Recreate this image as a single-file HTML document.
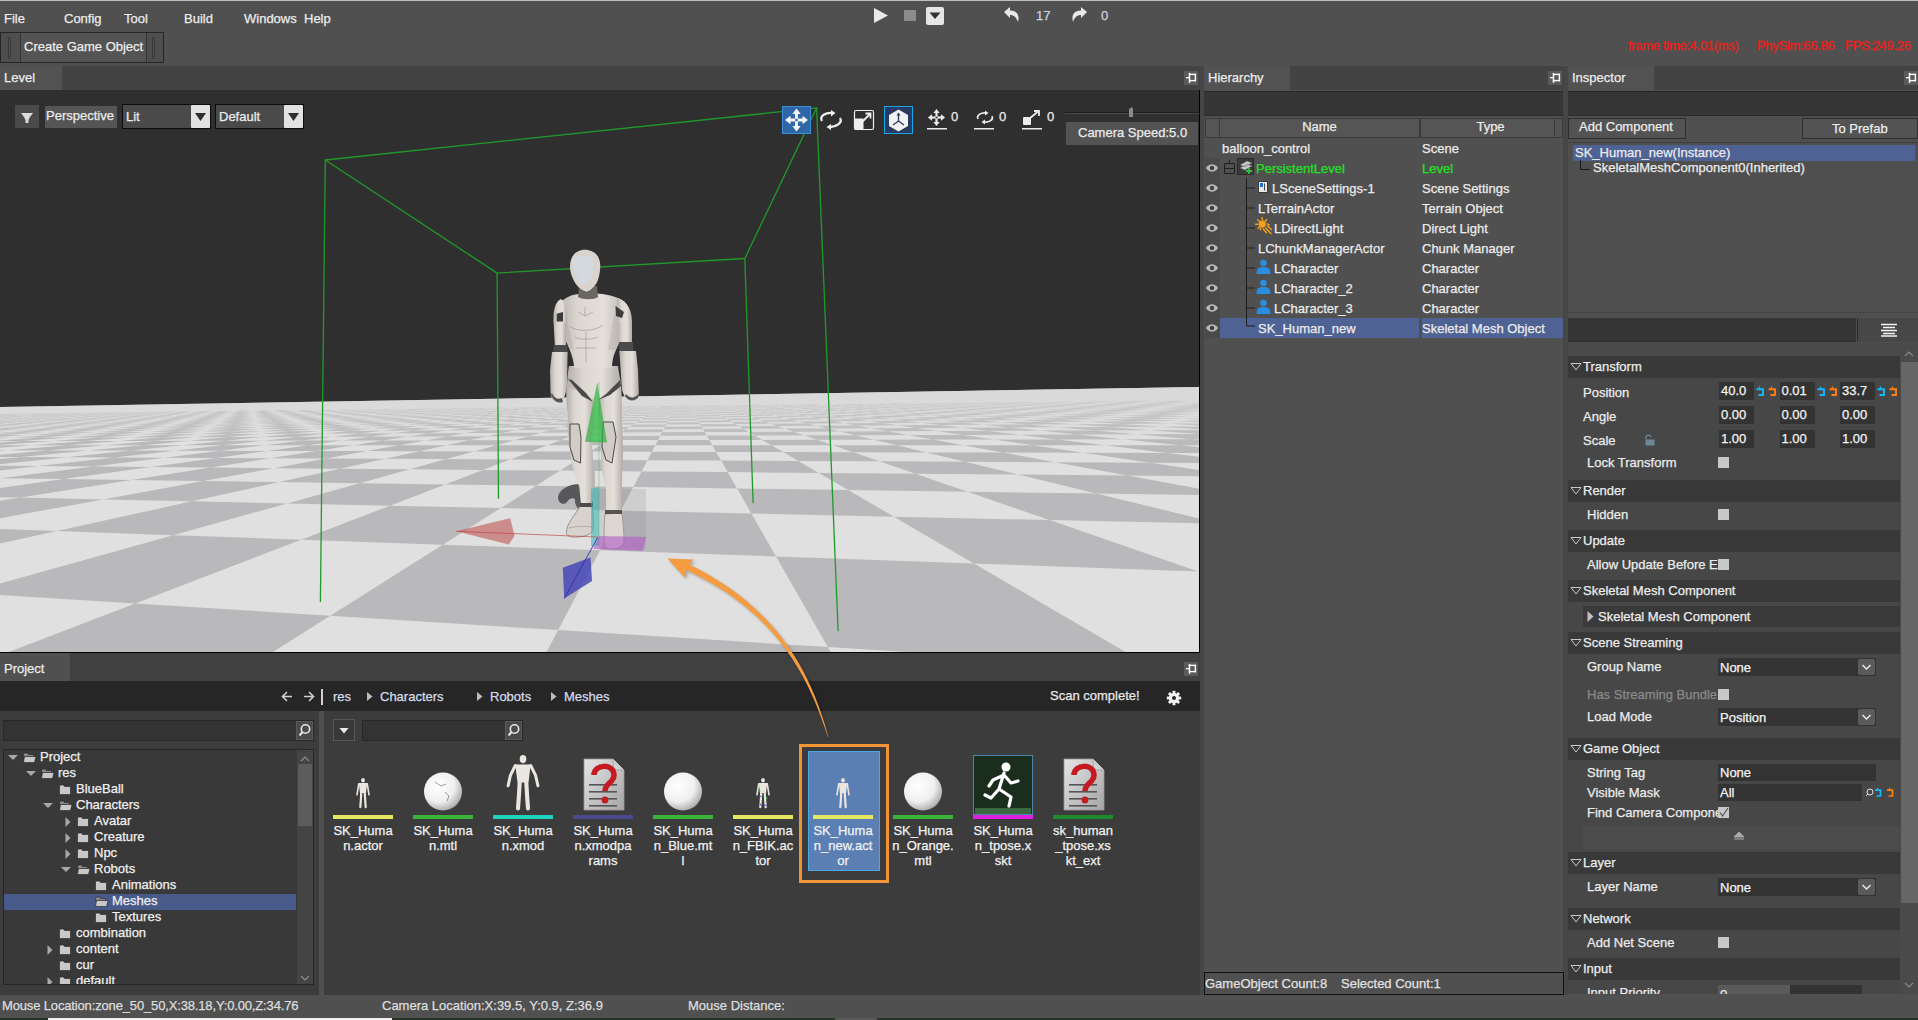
<!DOCTYPE html><html><head><meta charset='utf-8'><style>
*{margin:0;padding:0;box-sizing:border-box}
html,body{width:1918px;height:1020px;overflow:hidden;background:#505050}
body{position:relative;font-family:"Liberation Sans",sans-serif}
.a{position:absolute}
.t{position:absolute;font-size:13px;line-height:16px;color:#ececec;white-space:nowrap;-webkit-text-stroke:0.25px currentColor}
svg{position:absolute;overflow:visible}
</style></head><body>
<div class="a" style="left:0px;top:0px;width:1918px;height:1px;background:#bdbdbd;"></div>
<div class="a" style="left:0px;top:1px;width:1918px;height:64px;background:#505050;"></div>
<div class="t" style="left:4px;top:10.5px;">File</div>
<div class="t" style="left:64px;top:10.5px;">Config</div>
<div class="t" style="left:124px;top:10.5px;">Tool</div>
<div class="t" style="left:184px;top:10.5px;">Build</div>
<div class="t" style="left:244px;top:10.5px;">Windows</div>
<div class="t" style="left:304px;top:10.5px;">Help</div>
<div class="a" style="left:0px;top:32px;width:164px;height:31px;background:#4e4e4e;border:1px solid #262626;"></div>
<div class="a" style="left:20px;top:33px;width:1px;height:29px;background:#333;"></div>
<div class="a" style="left:146px;top:33px;width:1px;height:29px;background:#333;"></div>
<div class="a" style="left:21px;top:33px;width:125px;height:29px;background:#545454;"></div>
<div class="a" style="left:8px;top:37px;width:1px;height:22px;background:#3a3a3a;"></div>
<div class="a" style="left:10px;top:37px;width:1px;height:22px;background:#3a3a3a;"></div>
<div class="a" style="left:152px;top:37px;width:1px;height:22px;background:#3a3a3a;"></div>
<div class="a" style="left:154px;top:37px;width:1px;height:22px;background:#3a3a3a;"></div>
<div class="t" style="left:24px;top:38.5px;">Create Game Object</div>
<svg style="left:0;top:0" width="1918" height="32"><path d="M874 8 L888 15.5 L874 23 Z" fill="#eaeaea"/><rect x="904" y="10" width="12" height="11" rx="1" fill="#8c8c8c"/><rect x="926" y="7" width="18" height="18" rx="2" fill="#e6e6e6"/><path d="M929.5 12.5 L940.5 12.5 L935 19 Z" fill="#333"/><path d="M1004 12 L1010 7 L1010 10.5 C1016 10.5 1020 14 1018 22 C1016 16 1013 15 1010 15 L1010 18 Z" fill="#e8e8e8"/><path d="M1087 12 L1081 7 L1081 10.5 C1075 10.5 1071 14 1073 22 C1075 16 1078 15 1081 15 L1081 18 Z" fill="#e8e8e8"/></svg>
<div class="t" style="left:1036px;top:7.5px;color:#ccd4e2;">17</div>
<div class="t" style="left:1101px;top:7.5px;color:#ccd4e2;">0</div>
<div class="t" style="left:1628px;top:37.5px;color:#e8211d;-webkit-text-stroke:0.35px #e8211d;letter-spacing:-0.3px">frame time:4.01(ms)</div>
<div class="t" style="left:1757px;top:37.5px;color:#e8211d;-webkit-text-stroke:0.35px #e8211d;letter-spacing:-0.3px">PhySim:66.86</div>
<div class="t" style="left:1845px;top:37.5px;color:#e8211d;-webkit-text-stroke:0.35px #e8211d;letter-spacing:-0.3px">FPS:249.26</div>
<div class="a" style="left:0px;top:66px;width:1200px;height:24px;background:#434343;"></div>
<div class="a" style="left:0px;top:66px;width:62px;height:24px;background:#525252;"></div>
<div class="t" style="left:4px;top:69.5px;">Level</div>
<div class="a" style="left:1184px;top:71px;width:14px;height:14px;background:#5a5a5a;"></div>
<svg style="left:1184px;top:71px" width="14" height="14"><g fill="#ffffff"><rect x="4.8" y="1.9" width="1.4" height="10"/><rect x="4.8" y="2.7" width="7.2" height="1.4"/><rect x="4.8" y="8.9" width="7.2" height="1.4"/><rect x="10.7" y="2.7" width="1.4" height="7.6"/><rect x="2" y="6" width="3" height="1.3"/></g></svg>
<div class="a" style="left:1200px;top:66px;width:4px;height:929px;background:#464646;"></div>
<div class="a" style="left:1204px;top:66px;width:360px;height:24px;background:#434343;"></div>
<div class="a" style="left:1204px;top:66px;width:86px;height:24px;background:#525252;"></div>
<div class="t" style="left:1208px;top:69.5px;">Hierarchy</div>
<div class="a" style="left:1548px;top:71px;width:14px;height:14px;background:#5a5a5a;"></div>
<svg style="left:1548px;top:71px" width="14" height="14"><g fill="#ffffff"><rect x="4.8" y="1.9" width="1.4" height="10"/><rect x="4.8" y="2.7" width="7.2" height="1.4"/><rect x="4.8" y="8.9" width="7.2" height="1.4"/><rect x="10.7" y="2.7" width="1.4" height="7.6"/><rect x="2" y="6" width="3" height="1.3"/></g></svg>
<div class="a" style="left:1564px;top:66px;width:4px;height:929px;background:#464646;"></div>
<div class="a" style="left:1568px;top:66px;width:350px;height:24px;background:#434343;"></div>
<div class="a" style="left:1568px;top:66px;width:86px;height:24px;background:#525252;"></div>
<div class="t" style="left:1572px;top:69.5px;">Inspector</div>
<div class="a" style="left:1904px;top:71px;width:14px;height:14px;background:#5a5a5a;"></div>
<svg style="left:1904px;top:71px" width="14" height="14"><g fill="#ffffff"><rect x="4.8" y="1.9" width="1.4" height="10"/><rect x="4.8" y="2.7" width="7.2" height="1.4"/><rect x="4.8" y="8.9" width="7.2" height="1.4"/><rect x="10.7" y="2.7" width="1.4" height="7.6"/><rect x="2" y="6" width="3" height="1.3"/></g></svg>
<div class="a" style="left:0;top:90px;width:1200px;height:563px;background:#2f2f2f;overflow:hidden;border-right:1px solid #000;border-bottom:1px solid #000">
<svg style="left:0;top:-90px" width="1200" height="653" viewBox="0 0 1200 653"><defs><linearGradient id="hz" x1="0" y1="385" x2="0" y2="445" gradientUnits="userSpaceOnUse"><stop offset="0" stop-color="#d8d8d8" stop-opacity="0.95"/><stop offset="0.3" stop-color="#d6d6d6" stop-opacity="0.6"/><stop offset="1" stop-color="#d4d4d4" stop-opacity="0"/></linearGradient></defs><path d="M0 407 L1200 387 L1200 653 L0 653 Z" fill="#e0e0e0"/><path d="M-286.7 765.4 19.2 812.2 330.3 615.7 135.2 603.5ZM429.5 874.9 1008.9 963.5 827.8 647.0 558.2 630.1ZM-311.6 575.3 -181.4 583.5 56.8 531.1 -49.5 527.3ZM-33.7 592.8 135.2 603.5 301.2 539.7 173.2 535.2ZM330.3 615.7 558.2 630.1 600.1 550.3 442.8 544.7ZM827.8 647.0 1151.9 667.4 973.9 563.5 776.0 556.5ZM1548.7 692.4 2045.8 723.7 1454.7 580.4 1198.2 571.4ZM-146.9 523.9 -49.5 527.3 103.3 499.4 20.4 497.6ZM56.8 531.1 173.2 535.2 287.3 503.4 192.0 501.3ZM301.2 539.7 442.8 544.7 500.8 508.1 390.0 505.7ZM600.1 550.3 776.0 556.5 751.4 513.6 620.9 510.7ZM973.9 563.5 1198.2 571.4 1049.7 520.1 893.8 516.7ZM-57.1 495.9 20.4 497.6 131.6 480.1 63.7 479.1ZM103.3 499.4 192.0 501.3 279.2 482.1 203.3 481.1ZM287.3 503.4 390.0 505.7 445.2 484.4 359.7 483.3ZM500.8 508.1 620.9 510.7 633.3 487.1 536.2 485.7ZM751.4 513.6 893.8 516.7 848.2 490.1 737.1 488.5ZM1049.7 520.1 1221.2 523.8 1096.1 493.5 967.6 491.7ZM-119.5 476.6 -61.5 477.4 38.3 466.1 -14.2 465.6ZM-0.5 478.2 63.7 479.1 150.6 467.1 93.2 466.6ZM131.6 480.1 203.3 481.1 273.8 468.2 210.8 467.6ZM279.2 482.1 359.7 483.3 409.7 469.3 340.0 468.7ZM445.2 484.4 536.2 485.7 560.1 470.6 482.9 470.0ZM633.3 487.1 737.1 488.5 727.7 472.1 641.6 471.4ZM848.2 490.1 967.6 491.7 915.5 473.7 818.8 472.9ZM1096.1 493.5 1234.9 495.5 1127.5 475.6 1018.2 474.6ZM-64.4 465.2 -14.2 465.6 66.7 457.2 20.6 457.0ZM38.3 466.1 93.2 466.6 164.3 457.7 114.5 457.5ZM150.6 467.1 210.8 467.6 270.0 458.3 216.1 458.0ZM273.8 468.2 340.0 468.7 385.0 458.8 326.3 458.5ZM409.7 469.3 482.9 470.0 510.3 459.5 446.2 459.1ZM560.1 470.6 641.6 471.4 647.5 460.2 577.3 459.8ZM727.7 472.1 818.8 472.9 798.3 460.9 721.1 460.5ZM915.5 473.7 1018.2 474.6 965.0 461.7 879.5 461.3ZM1127.5 475.6 1244.0 476.6 1150.1 462.7 1055.0 462.2ZM-107.8 456.4 -66.5 456.6 7.5 450.3 -30.9 450.2ZM-23.8 456.8 20.6 457.0 88.3 450.5 47.2 450.4ZM66.7 457.2 114.5 457.5 174.6 450.7 130.7 450.6ZM164.3 457.7 216.1 458.0 267.2 450.9 220.1 450.8ZM270.0 458.3 326.3 458.5 366.8 451.1 316.1 451.0ZM385.0 458.8 446.2 459.1 474.2 451.4 419.5 451.2ZM510.3 459.5 577.3 459.8 590.2 451.6 531.0 451.5ZM647.5 460.2 721.1 460.5 716.1 451.9 651.9 451.8ZM798.3 460.9 879.5 461.3 853.2 452.2 783.2 452.1ZM965.0 461.7 1055.0 462.2 1002.9 452.5 926.3 452.4ZM1150.1 462.7 1250.5 463.2 1167.1 452.9 1083.0 452.7ZM-68.1 450.2 -30.9 450.2 32.4 445.2 -2.5 445.2ZM7.5 450.3 47.2 450.4 105.3 445.2 68.3 445.2ZM88.3 450.5 130.7 450.6 182.7 445.2 143.4 445.2ZM174.6 450.7 220.1 450.8 265.1 445.2 223.2 445.2ZM267.2 450.9 316.1 451.0 352.9 445.2 308.3 445.2ZM366.8 451.1 419.5 451.2 446.8 445.2 399.1 445.2ZM474.2 451.4 531.0 451.5 547.3 445.2 496.2 445.2ZM590.2 451.6 651.9 451.8 655.3 445.2 600.3 445.2ZM716.1 451.9 783.2 452.1 771.5 445.3 712.3 445.2ZM853.2 452.2 926.3 452.4 897.0 445.3 833.0 445.3ZM1002.9 452.5 1083.0 452.7 1032.8 445.3 963.5 445.3ZM1167.1 452.9 1255.3 453.1 1180.4 445.3 1105.1 445.3ZM-36.4 445.2 -2.5 445.2 52.6 441.0 20.7 441.1ZM32.4 445.2 68.3 445.2 119.0 440.9 85.3 441.0ZM105.3 445.2 143.4 445.2 189.1 440.8 153.6 440.9ZM182.7 445.2 223.2 445.2 263.3 440.7 225.7 440.7ZM265.1 445.2 308.3 445.2 341.9 440.5 302.0 440.6ZM352.9 445.2 399.1 445.2 425.3 440.4 383.0 440.5ZM446.8 445.2 496.2 445.2 514.0 440.3 469.0 440.3ZM547.3 445.2 600.3 445.2 608.5 440.1 560.5 440.2ZM655.3 445.2 712.3 445.2 709.3 440.0 658.0 440.0ZM771.5 445.3 833.0 445.3 817.1 439.8 762.3 439.9ZM897.0 445.3 963.5 445.3 932.8 439.6 873.9 439.7ZM1032.8 445.3 1105.1 445.3 1057.1 439.4 993.8 439.5ZM1180.4 445.3 1259.1 445.3 1191.1 439.2 1122.9 439.3ZM-70.2 441.2 -40.7 441.2 11.2 437.7 -16.9 437.8ZM-10.4 441.1 20.7 441.1 69.3 437.6 39.9 437.6ZM52.6 441.0 85.3 441.0 130.3 437.4 99.4 437.5ZM119.0 440.9 153.6 440.9 194.4 437.2 162.0 437.3ZM189.1 440.8 225.7 440.7 261.9 437.0 227.7 437.1ZM263.3 440.7 302.0 440.6 333.0 436.8 297.0 436.9ZM341.9 440.5 383.0 440.5 408.0 436.5 370.0 436.7ZM425.3 440.4 469.0 440.3 487.3 436.3 447.1 436.4ZM514.0 440.3 560.5 440.2 571.3 436.0 528.7 436.2ZM608.5 440.1 658.0 440.0 660.3 435.8 615.1 435.9ZM709.3 440.0 762.3 439.9 754.8 435.5 706.8 435.6ZM817.1 439.8 873.9 439.7 855.4 435.2 804.3 435.3ZM932.8 439.6 993.8 439.5 962.6 434.9 908.1 435.0ZM1057.1 439.4 1122.9 439.3 1077.2 434.5 1018.9 434.7ZM1191.1 439.2 1262.1 439.1 1199.9 434.1 1137.5 434.3ZM-44.2 437.9 -16.9 437.8 29.4 434.9 3.3 435.0ZM11.2 437.7 39.9 437.6 83.4 434.6 56.1 434.8ZM69.3 437.6 99.4 437.5 139.8 434.4 111.3 434.5ZM130.3 437.4 162.0 437.3 198.8 434.2 169.0 434.3ZM194.4 437.2 227.7 437.1 260.7 433.9 229.4 434.0ZM261.9 437.0 297.0 436.9 325.6 433.6 292.8 433.8ZM333.0 436.8 370.0 436.7 393.8 433.3 359.3 433.5ZM408.0 436.5 447.1 436.4 465.5 433.0 429.2 433.2ZM487.3 436.3 528.7 436.2 541.1 432.7 502.8 432.9ZM571.3 436.0 615.1 435.9 620.7 432.4 580.3 432.6ZM660.3 435.8 706.8 435.6 704.8 432.0 662.1 432.2ZM754.8 435.5 804.3 435.3 793.7 431.7 748.6 431.9ZM855.4 435.2 908.1 435.0 887.9 431.3 840.1 431.5ZM962.6 434.9 1018.9 434.7 987.8 430.9 937.1 431.1ZM1077.2 434.5 1137.5 434.3 1094.1 430.4 1040.1 430.6ZM1199.9 434.1 1264.6 433.9 1207.3 429.9 1149.8 430.2ZM-22.2 435.1 3.3 435.0 45.1 432.4 20.7 432.5ZM29.4 434.9 56.1 434.8 95.4 432.2 70.0 432.3ZM83.4 434.6 111.3 434.5 147.9 431.9 121.4 432.0ZM139.8 434.4 169.0 434.3 202.6 431.6 174.9 431.8ZM198.8 434.2 229.4 434.0 259.7 431.3 230.9 431.5ZM260.7 433.9 292.8 433.8 319.5 431.0 289.3 431.2ZM325.6 433.6 359.3 433.5 381.9 430.7 350.3 430.8ZM393.8 433.3 429.2 433.2 447.4 430.3 414.3 430.5ZM465.5 433.0 502.8 432.9 516.0 430.0 481.3 430.2ZM541.1 432.7 580.3 432.6 588.0 429.6 551.6 429.8ZM620.7 432.4 662.1 432.2 663.7 429.2 625.4 429.4ZM704.8 432.0 748.6 431.9 743.4 428.8 703.0 429.0ZM793.7 431.7 840.1 431.5 827.3 428.4 784.8 428.6ZM887.9 431.3 937.1 431.1 915.9 427.9 871.0 428.2ZM987.8 430.9 1040.1 430.6 1009.4 427.4 962.0 427.7ZM1094.1 430.4 1149.8 430.2 1108.5 426.9 1058.2 427.2ZM1207.3 429.9 1266.7 429.7 1213.5 426.4 1160.2 426.7ZM-49.7 432.9 -26.7 432.8 13.3 430.6 -8.8 430.7ZM-3.2 432.7 20.7 432.5 58.7 430.3 35.7 430.4ZM45.1 432.4 70.0 432.3 105.8 430.0 82.0 430.2ZM95.4 432.2 121.4 432.0 154.8 429.7 130.1 429.9ZM147.9 431.9 174.9 431.8 205.8 429.4 180.1 429.6ZM202.6 431.6 230.9 431.5 258.9 429.1 232.1 429.3ZM259.7 431.3 289.3 431.2 314.2 428.8 286.2 428.9ZM319.5 431.0 350.3 430.8 371.8 428.4 342.7 428.6ZM381.9 430.7 414.3 430.5 432.0 428.1 401.6 428.2ZM447.4 430.3 481.3 430.2 494.9 427.7 463.1 427.9ZM516.0 430.0 551.6 429.8 560.6 427.3 527.4 427.5ZM588.0 429.6 625.4 429.4 629.4 426.9 594.6 427.1ZM663.7 429.2 703.0 429.0 701.5 426.4 665.1 426.7ZM743.4 428.8 784.8 428.6 777.2 426.0 738.9 426.2ZM827.3 428.4 871.0 428.2 856.6 425.5 816.4 425.7ZM915.9 427.9 962.0 427.7 940.2 425.0 897.9 425.3ZM1009.4 427.4 1058.2 427.2 1028.1 424.5 983.6 424.7ZM1108.5 426.9 1160.2 426.7 1120.9 423.9 1073.9 424.2ZM1213.5 426.4 1268.4 426.1 1218.8 423.3 1169.2 423.6ZM-30.5 430.8 -8.8 430.7 27.7 428.7 6.8 428.9ZM13.3 430.6 35.7 430.4 70.5 428.4 48.9 428.6ZM58.7 430.3 82.0 430.2 114.9 428.1 92.5 428.3ZM105.8 430.0 130.1 429.9 160.9 427.8 137.7 428.0ZM154.8 429.7 180.1 429.6 208.6 427.5 184.5 427.7ZM205.8 429.4 232.1 429.3 258.2 427.2 233.1 427.3ZM258.9 429.1 286.2 428.9 309.6 426.8 283.6 427.0ZM314.2 428.8 342.7 428.6 363.2 426.5 336.1 426.6ZM371.8 428.4 401.6 428.2 418.9 426.1 390.7 426.3ZM432.0 428.1 463.1 427.9 476.9 425.7 447.6 425.9ZM494.9 427.7 527.4 427.5 537.3 425.3 506.8 425.5ZM560.6 427.3 594.6 427.1 600.4 424.9 568.5 425.1ZM629.4 426.9 665.1 426.7 666.2 424.4 633.0 424.6ZM701.5 426.4 738.9 426.2 735.1 424.0 700.3 424.2ZM777.2 426.0 816.4 425.7 807.1 423.5 770.7 423.7ZM856.6 425.5 897.9 425.3 882.5 423.0 844.3 423.2ZM940.2 425.0 983.6 424.7 961.5 422.4 921.5 422.7ZM1028.1 424.5 1073.9 424.2 1044.5 421.9 1002.5 422.2ZM1120.9 423.9 1169.2 423.6 1131.7 421.3 1087.6 421.6ZM1218.8 423.3 1269.9 423.0 1223.5 420.7 1177.0 421.0ZM-53.6 429.3 -33.8 429.1 1.3 427.4 -17.8 427.5ZM-13.6 429.0 6.8 428.9 40.5 427.1 20.7 427.2ZM27.7 428.7 48.9 428.6 81.0 426.8 60.6 427.0ZM70.5 428.4 92.5 428.3 122.9 426.5 101.7 426.6ZM114.9 428.1 137.7 428.0 166.2 426.2 144.3 426.3ZM160.9 427.8 184.5 427.7 211.0 425.8 188.4 426.0ZM208.6 427.5 233.1 427.3 257.5 425.5 234.1 425.7ZM258.2 427.2 283.6 427.0 305.7 425.1 281.4 425.3ZM309.6 426.8 336.1 426.6 355.6 424.8 330.4 425.0ZM363.2 426.5 390.7 426.3 407.4 424.4 381.3 424.6ZM418.9 426.1 447.6 425.9 461.3 424.0 434.1 424.2ZM476.9 425.7 506.8 425.5 517.2 423.6 489.0 423.8ZM537.3 425.3 568.5 425.1 575.4 423.2 546.1 423.4ZM600.4 424.9 633.0 424.6 636.0 422.7 605.4 422.9ZM666.2 424.4 700.3 424.2 699.1 422.2 667.3 422.5ZM735.1 424.0 770.7 423.7 765.0 421.8 731.7 422.0ZM807.1 423.5 844.3 423.2 833.6 421.2 798.9 421.5ZM882.5 423.0 921.5 422.7 905.4 420.7 869.1 421.0ZM961.5 422.4 1002.5 422.2 980.4 420.2 942.5 420.4ZM1044.5 421.9 1087.6 421.6 1058.9 419.6 1019.2 419.9ZM1131.7 421.3 1177.0 421.0 1141.2 419.0 1099.6 419.3ZM1223.5 420.7 1271.2 420.3 1227.5 418.3 1183.9 418.7ZM-36.7 427.7 -17.8 427.5 14.6 425.9 -3.6 426.1ZM1.3 427.4 20.7 427.2 51.8 425.6 33.1 425.8ZM40.5 427.1 60.6 427.0 90.3 425.3 70.9 425.5ZM81.0 426.8 101.7 426.6 129.9 425.0 109.9 425.2ZM122.9 426.5 144.3 426.3 170.9 424.7 150.2 424.9ZM166.2 426.2 188.4 426.0 213.2 424.4 191.9 424.5ZM211.0 425.8 234.1 425.7 256.9 424.0 234.9 424.2ZM257.5 425.5 281.4 425.3 302.2 423.7 279.4 423.8ZM305.7 425.1 330.4 425.0 349.0 423.3 325.4 423.5ZM355.6 424.8 381.3 424.6 397.5 422.9 373.0 423.1ZM407.4 424.4 434.1 424.2 447.7 422.5 422.4 422.7ZM461.3 424.0 489.0 423.8 499.8 422.1 473.5 422.3ZM517.2 423.6 546.1 423.4 553.8 421.7 526.5 421.9ZM575.4 423.2 605.4 422.9 609.9 421.2 581.6 421.4ZM636.0 422.7 667.3 422.5 668.2 420.8 638.7 421.0ZM699.1 422.2 731.7 422.0 728.8 420.3 698.2 420.5ZM765.0 421.8 798.9 421.5 791.8 419.8 760.0 420.0ZM833.6 421.2 869.1 421.0 857.4 419.3 824.3 419.5ZM905.4 420.7 942.5 420.4 925.9 418.7 891.3 419.0ZM980.4 420.2 1019.2 419.9 997.2 418.1 961.2 418.4ZM1058.9 419.6 1099.6 419.3 1071.8 417.6 1034.1 417.9ZM1141.2 419.0 1183.9 418.7 1149.7 416.9 1110.3 417.2ZM1227.5 418.3 1272.3 418.0 1231.1 416.3 1189.9 416.6ZM-21.5 426.2 -3.6 426.1 26.5 424.6 9.2 424.8ZM14.6 425.9 33.1 425.8 62.0 424.3 44.2 424.5ZM51.8 425.6 70.9 425.5 98.6 424.0 80.2 424.2ZM90.3 425.3 109.9 425.2 136.3 423.7 117.3 423.9ZM129.9 425.0 150.2 424.9 175.1 423.4 155.5 423.6ZM170.9 424.7 191.9 424.5 215.1 423.1 194.9 423.2ZM213.2 424.4 234.9 424.2 256.4 422.7 235.6 422.9ZM256.9 424.0 279.4 423.8 299.1 422.3 277.6 422.5ZM302.2 423.7 325.4 423.5 343.1 422.0 320.9 422.2ZM349.0 423.3 373.0 423.1 388.7 421.6 365.7 421.8ZM397.5 422.9 422.4 422.7 435.7 421.2 412.0 421.4ZM447.7 422.5 473.5 422.3 484.4 420.8 459.9 421.0ZM499.8 422.1 526.5 421.9 534.8 420.4 509.4 420.6ZM553.8 421.7 581.6 421.4 587.1 419.9 560.7 420.1ZM609.9 421.2 638.7 421.0 641.2 419.5 613.9 419.7ZM668.2 420.8 698.2 420.5 697.3 419.0 669.0 419.2ZM728.8 420.3 760.0 420.0 755.5 418.5 726.1 418.7ZM791.8 419.8 824.3 419.5 816.0 418.0 785.5 418.2ZM857.4 419.3 891.3 419.0 878.9 417.5 847.1 417.7ZM925.9 418.7 961.2 418.4 944.3 416.9 911.3 417.2ZM997.2 418.1 1034.1 417.9 1012.3 416.3 978.0 416.6ZM1071.8 417.6 1110.3 417.2 1083.2 415.7 1047.4 416.0ZM1149.7 416.9 1189.9 416.6 1157.2 415.1 1119.8 415.4ZM1231.1 416.3 1273.3 416.0 1234.3 414.5 1195.3 414.8ZM-41.4 425.2 -24.8 425.1 4.4 423.8 -11.8 423.9ZM-7.9 424.9 9.2 424.8 37.3 423.5 20.7 423.6ZM26.5 424.6 44.2 424.5 71.2 423.2 54.2 423.3ZM62.0 424.3 80.2 424.2 106.1 422.9 88.5 423.0ZM98.6 424.0 117.3 423.9 141.9 422.5 123.9 422.7ZM136.3 423.7 155.5 423.6 178.8 422.2 160.3 422.4ZM175.1 423.4 194.9 423.2 216.8 421.9 197.7 422.1ZM215.1 423.1 235.6 422.9 256.0 421.5 236.3 421.7ZM256.4 422.7 277.6 422.5 296.3 421.2 276.0 421.4ZM299.1 422.3 320.9 422.2 337.9 420.8 317.0 421.0ZM343.1 422.0 365.7 421.8 380.8 420.4 359.2 420.6ZM388.7 421.6 412.0 421.4 425.1 420.0 402.8 420.2ZM435.7 421.2 459.9 421.0 470.9 419.6 447.8 419.8ZM484.4 420.8 509.4 420.6 518.1 419.2 494.3 419.4ZM534.8 420.4 560.7 420.1 566.9 418.8 542.3 419.0ZM587.1 419.9 613.9 419.7 617.4 418.3 592.0 418.6ZM641.2 419.5 669.0 419.2 669.7 417.9 643.3 418.1ZM697.3 419.0 726.1 418.7 723.8 417.4 696.5 417.6ZM755.5 418.5 785.5 418.2 779.9 416.9 751.6 417.1ZM816.0 418.0 847.1 417.7 838.0 416.4 808.7 416.6ZM878.9 417.5 911.3 417.2 898.3 415.8 867.9 416.1ZM944.3 416.9 978.0 416.6 960.9 415.3 929.3 415.6ZM1012.3 416.3 1047.4 416.0 1025.9 414.7 993.1 415.0ZM1083.2 415.7 1119.8 415.4 1093.6 414.1 1059.4 414.4ZM1157.2 415.1 1195.3 414.8 1163.9 413.5 1128.4 413.8ZM-27.7 424.1 -11.8 423.9 15.5 422.7 0.0 422.9ZM4.4 423.8 20.7 423.6 47.1 422.4 31.2 422.6ZM37.3 423.5 54.2 423.3 79.5 422.1 63.2 422.3ZM71.2 423.2 88.5 423.0 112.8 421.8 96.1 422.0ZM106.1 422.9 123.9 422.7 147.1 421.5 129.8 421.6ZM141.9 422.5 160.3 422.4 182.2 421.2 164.5 421.3ZM178.8 422.2 197.7 422.1 218.4 420.8 200.2 421.0ZM216.8 421.9 236.3 421.7 255.6 420.5 236.9 420.7ZM256.0 421.5 276.0 421.4 293.9 420.1 274.6 420.3ZM296.3 421.2 317.0 421.0 333.3 419.8 313.4 419.9ZM337.9 420.8 359.2 420.6 373.8 419.4 353.4 419.6ZM380.8 420.4 402.8 420.2 415.7 419.0 394.6 419.2ZM425.1 420.0 447.8 419.8 458.7 418.6 437.0 418.8ZM470.9 419.6 494.3 419.4 503.2 418.2 480.8 418.4ZM518.1 419.2 542.3 419.0 549.1 417.8 525.9 418.0ZM566.9 418.8 592.0 418.6 596.4 417.3 572.5 417.5ZM617.4 418.3 643.3 418.1 645.3 416.9 620.6 417.1ZM669.7 417.9 696.5 417.6 695.8 416.4 670.3 416.6ZM723.8 417.4 751.6 417.1 748.0 415.9 721.7 416.2ZM779.9 416.9 808.7 416.6 802.1 415.4 774.8 415.7ZM838.0 416.4 867.9 416.1 858.0 414.9 829.8 415.2ZM898.3 415.8 929.3 415.6 916.0 414.4 886.7 414.6ZM960.9 415.3 993.1 415.0 976.0 413.8 945.7 414.1ZM1025.9 414.7 1059.4 414.4 1038.3 413.2 1006.9 413.5ZM1093.6 414.1 1128.4 413.8 1102.9 412.6 1070.3 412.9ZM1163.9 413.5 1200.2 413.1 1170.0 412.0 1136.1 412.3ZM-15.2 423.0 0.0 422.9 25.7 421.7 10.8 421.9ZM15.5 422.7 31.2 422.6 56.0 421.4 40.8 421.6ZM47.1 422.4 63.2 422.3 87.1 421.2 71.5 421.3ZM79.5 422.1 96.1 422.0 119.0 420.8 103.0 421.0ZM112.8 421.8 129.8 421.6 151.7 420.5 135.3 420.7ZM147.1 421.5 164.5 421.3 185.3 420.2 168.4 420.4ZM182.2 421.2 200.2 421.0 219.8 419.9 202.4 420.0ZM218.4 420.8 236.9 420.7 255.2 419.5 237.4 419.7ZM255.6 420.5 274.6 420.3 291.6 419.2 273.3 419.4ZM293.9 420.1 313.4 419.9 329.1 418.8 310.2 419.0ZM333.3 419.8 353.4 419.6 367.5 418.4 348.2 418.6ZM373.8 419.4 394.6 419.2 407.1 418.1 387.2 418.3ZM415.7 419.0 437.0 418.8 447.9 417.7 427.4 417.9ZM458.7 418.6 480.8 418.4 489.9 417.3 468.7 417.5ZM503.2 418.2 525.9 418.0 533.1 416.8 511.3 417.1ZM549.1 417.8 572.5 417.5 577.6 416.4 555.2 416.6ZM596.4 417.3 620.6 417.1 623.5 416.0 600.4 416.2ZM645.3 416.9 670.3 416.6 670.9 415.5 647.0 415.7ZM695.8 416.4 721.7 416.2 719.8 415.0 695.2 415.3ZM748.0 415.9 774.8 415.7 770.3 414.6 744.8 414.8ZM802.1 415.4 829.8 415.2 822.4 414.1 796.1 414.3ZM858.0 414.9 886.7 414.6 876.3 413.5 849.2 413.8ZM916.0 414.4 945.7 414.1 932.1 413.0 904.0 413.3ZM976.0 413.8 1006.9 413.5 989.8 412.4 960.7 412.7ZM1038.3 413.2 1070.3 412.9 1049.5 411.9 1019.4 412.2ZM1102.9 412.6 1136.1 412.3 1111.4 411.3 1080.2 411.6ZM1170.0 412.0 1204.6 411.7 1175.5 410.7 1143.2 411.0ZM-32.7 422.3 -18.4 422.2 6.6 421.1 -7.4 421.3ZM-3.9 422.0 10.8 421.9 35.0 420.9 20.7 421.0ZM25.7 421.7 40.8 421.6 64.2 420.6 49.5 420.7ZM56.0 421.4 71.5 421.3 94.0 420.3 79.0 420.4ZM87.1 421.2 103.0 421.0 124.6 420.0 109.2 420.1ZM119.0 420.8 135.3 420.7 156.0 419.6 140.2 419.8ZM151.7 420.5 168.4 420.4 188.1 419.3 171.9 419.5ZM185.3 420.2 202.4 420.0 221.1 419.0 204.5 419.2ZM219.8 419.9 237.4 419.7 254.9 418.7 237.9 418.8ZM255.2 419.5 273.3 419.4 289.6 418.3 272.1 418.5ZM291.6 419.2 310.2 419.0 325.2 418.0 307.3 418.1ZM329.1 418.8 348.2 418.6 361.8 417.6 343.4 417.8ZM367.5 418.4 387.2 418.3 399.4 417.2 380.5 417.4ZM407.1 418.1 427.4 417.9 438.1 416.8 418.6 417.0ZM447.9 417.7 468.7 417.5 477.8 416.4 457.8 416.6ZM489.9 417.3 511.3 417.1 518.7 416.0 498.1 416.2ZM533.1 416.8 555.2 416.6 560.8 415.6 539.6 415.8ZM577.6 416.4 600.4 416.2 604.1 415.2 582.3 415.4ZM623.5 416.0 647.0 415.7 648.7 414.7 626.2 415.0ZM670.9 415.5 695.2 415.3 694.6 414.3 671.4 414.5ZM719.8 415.0 744.8 414.8 741.9 413.8 718.1 414.0ZM770.3 414.6 796.1 414.3 790.8 413.3 766.2 413.6ZM822.4 414.1 849.2 413.8 841.2 412.8 815.8 413.1ZM876.3 413.5 904.0 413.3 893.2 412.3 867.0 412.6ZM932.1 413.0 960.7 412.7 946.9 411.8 919.8 412.0ZM989.8 412.4 1019.4 412.2 1002.4 411.2 974.4 411.5ZM1049.5 411.9 1080.2 411.6 1059.8 410.6 1030.8 410.9ZM1111.4 411.3 1143.2 411.0 1119.1 410.0 1089.2 410.3ZM1175.5 410.7 1208.5 410.3 1180.6 409.4 1149.6 409.7ZM-21.2 421.4 -7.4 421.3 16.2 420.3 2.7 420.5ZM6.6 421.1 20.7 421.0 43.6 420.0 29.8 420.2ZM35.0 420.9 49.5 420.7 71.7 419.8 57.6 419.9ZM64.2 420.6 79.0 420.4 100.4 419.5 85.9 419.6ZM94.0 420.3 109.2 420.1 129.8 419.2 115.0 419.3ZM124.6 420.0 140.2 419.8 159.8 418.8 144.7 419.0ZM156.0 419.6 171.9 419.5 190.7 418.5 175.2 418.7ZM188.1 419.3 204.5 419.2 222.2 418.2 206.4 418.4ZM221.1 419.0 237.9 418.8 254.6 417.9 238.3 418.0ZM254.9 418.7 272.1 418.5 287.8 417.5 271.1 417.7ZM289.6 418.3 307.3 418.1 321.8 417.2 304.7 417.4ZM325.2 418.0 343.4 417.8 356.7 416.8 339.1 417.0ZM361.8 417.6 380.5 417.4 392.5 416.5 374.5 416.6ZM399.4 417.2 418.6 417.0 429.2 416.1 410.7 416.3ZM438.1 416.8 457.8 416.6 467.0 415.7 448.0 415.9ZM477.8 416.4 498.1 416.2 505.7 415.3 486.2 415.5ZM518.7 416.0 539.6 415.8 545.6 414.9 525.5 415.1ZM560.8 415.6 582.3 415.4 586.5 414.5 565.9 414.7ZM604.1 415.2 626.2 415.0 628.6 414.0 607.4 414.2ZM648.7 414.7 671.4 414.5 671.9 413.6 650.1 413.8ZM694.6 414.3 718.1 414.0 716.5 413.1 694.1 413.4ZM741.9 413.8 766.2 413.6 762.4 412.7 739.3 412.9ZM790.8 413.3 815.8 413.1 809.7 412.2 785.9 412.4ZM841.2 412.8 867.0 412.6 858.4 411.7 833.9 411.9ZM893.2 412.3 919.8 412.0 908.7 411.2 883.4 411.4ZM946.9 411.8 974.4 411.5 960.5 410.6 934.4 410.9ZM1002.4 411.2 1030.8 410.9 1014.0 410.1 987.0 410.3ZM1059.8 410.6 1089.2 410.3 1069.2 409.5 1041.4 409.8ZM1119.1 410.0 1149.6 409.7 1126.2 408.9 1097.5 409.2ZM1180.6 409.4 1212.1 409.1 1185.2 408.3 1155.5 408.6ZM-10.6 420.6 2.7 420.5 25.1 419.6 12.1 419.7ZM16.2 420.3 29.8 420.2 51.5 419.3 38.2 419.4ZM43.6 420.0 57.6 419.9 78.6 419.0 65.0 419.1ZM71.7 419.8 85.9 419.6 106.2 418.7 92.3 418.9ZM100.4 419.5 115.0 419.3 134.5 418.4 120.3 418.6ZM129.8 419.2 144.7 419.0 163.4 418.1 148.9 418.3ZM159.8 418.8 175.2 418.7 193.0 417.8 178.1 418.0ZM190.7 418.5 206.4 418.4 223.3 417.5 208.1 417.6ZM222.2 418.2 238.3 418.0 254.3 417.1 238.7 417.3ZM254.6 417.9 271.1 417.7 286.1 416.8 270.1 417.0ZM287.8 417.5 304.7 417.4 318.6 416.5 302.2 416.6ZM321.8 417.2 339.1 417.0 351.9 416.1 335.2 416.3ZM356.7 416.8 374.5 416.6 386.1 415.8 368.9 415.9ZM392.5 416.5 410.7 416.3 421.1 415.4 403.5 415.6ZM429.2 416.1 448.0 415.9 457.1 415.0 439.0 415.2ZM467.0 415.7 486.2 415.5 493.9 414.6 475.4 414.8ZM505.7 415.3 525.5 415.1 531.8 414.2 512.7 414.4ZM545.6 414.9 565.9 414.7 570.6 413.8 551.0 414.0ZM586.5 414.5 607.4 414.2 610.5 413.4 590.4 413.6ZM628.6 414.0 650.1 413.8 651.5 413.0 630.8 413.2ZM671.9 413.6 694.1 413.4 693.6 412.5 672.4 412.7ZM716.5 413.1 739.3 412.9 736.9 412.1 715.1 412.3ZM762.4 412.7 785.9 412.4 781.4 411.6 759.0 411.8ZM809.7 412.2 833.9 411.9 827.3 411.1 804.2 411.3ZM858.4 411.7 883.4 411.4 874.4 410.6 850.7 410.9ZM908.7 411.2 934.4 410.9 923.0 410.1 898.5 410.4ZM960.5 410.6 987.0 410.3 973.1 409.6 947.9 409.8ZM1014.0 410.1 1041.4 409.8 1024.7 409.0 998.7 409.3ZM1069.2 409.5 1097.5 409.2 1077.9 408.5 1051.1 408.7ZM1126.2 408.9 1155.5 408.6 1132.8 407.9 1105.1 408.2ZM1185.2 408.3 1215.4 408.0 1189.4 407.3 1160.9 407.6ZM-26.1 420.1 -13.5 420.0 8.3 419.1 -4.0 419.3ZM-0.8 419.8 12.1 419.7 33.3 418.9 20.7 419.0ZM25.1 419.6 38.2 419.4 58.9 418.6 46.0 418.7ZM51.5 419.3 65.0 419.1 85.0 418.3 71.9 418.5ZM78.6 419.0 92.3 418.9 111.6 418.0 98.2 418.2ZM106.2 418.7 120.3 418.6 138.9 417.7 125.2 417.9ZM134.5 418.4 148.9 418.3 166.7 417.4 152.7 417.6ZM163.4 418.1 178.1 418.0 195.2 417.1 180.9 417.3ZM193.0 417.8 208.1 417.6 224.3 416.8 209.7 417.0ZM223.3 417.5 238.7 417.3 254.1 416.5 239.1 416.6ZM254.3 417.1 270.1 417.0 284.5 416.2 269.2 416.3ZM286.1 416.8 302.2 416.6 315.7 415.8 300.0 416.0ZM318.6 416.5 335.2 416.3 347.6 415.5 331.6 415.6ZM351.9 416.1 368.9 415.9 380.3 415.1 363.8 415.3ZM386.1 415.8 403.5 415.6 413.7 414.8 396.9 414.9ZM421.1 415.4 439.0 415.2 448.0 414.4 430.8 414.6ZM457.1 415.0 475.4 414.8 483.2 414.0 465.5 414.2ZM493.9 414.6 512.7 414.4 519.2 413.6 501.1 413.8ZM531.8 414.2 551.0 414.0 556.1 413.2 537.5 413.4ZM570.6 413.8 590.4 413.6 594.0 412.8 574.9 413.0ZM610.5 413.4 630.8 413.2 632.9 412.4 613.3 412.6ZM651.5 413.0 672.4 412.7 672.8 412.0 652.7 412.2ZM693.6 412.5 715.1 412.3 713.8 411.5 693.1 411.7ZM736.9 412.1 759.0 411.8 755.9 411.1 734.7 411.3ZM781.4 411.6 804.2 411.3 799.1 410.6 777.3 410.8ZM827.3 411.1 850.7 410.9 843.6 410.1 821.2 410.4ZM874.4 410.6 898.5 410.4 889.3 409.6 866.3 409.9ZM923.0 410.1 947.9 409.8 936.3 409.1 912.6 409.4ZM973.1 409.6 998.7 409.3 984.7 408.6 960.3 408.9ZM1024.7 409.0 1051.1 408.7 1034.6 408.1 1009.5 408.3ZM1077.9 408.5 1105.1 408.2 1085.9 407.5 1060.0 407.8ZM1132.8 407.9 1160.9 407.6 1138.8 406.9 1112.1 407.2ZM1189.4 407.3 1218.4 407.0 1193.3 406.3 1165.8 406.6ZM-16.2 419.4 -4.0 419.3 16.7 418.5 4.8 418.6ZM8.3 419.1 20.7 419.0 41.0 418.2 28.8 418.4ZM33.3 418.9 46.0 418.7 65.7 417.9 53.3 418.1ZM58.9 418.6 71.9 418.5 90.9 417.7 78.2 417.8ZM85.0 418.3 98.2 418.2 116.6 417.4 103.7 417.5ZM111.6 418.0 125.2 417.9 142.9 417.1 129.7 417.2ZM138.9 417.7 152.7 417.6 169.8 416.8 156.3 416.9ZM166.7 417.4 180.9 417.3 197.2 416.5 183.4 416.6ZM195.2 417.1 209.7 417.0 225.2 416.2 211.1 416.3ZM224.3 416.8 239.1 416.6 253.8 415.9 239.4 416.0ZM254.1 416.5 269.2 416.3 283.1 415.5 268.4 415.7ZM284.5 416.2 300.0 416.0 313.0 415.2 298.0 415.4ZM315.7 415.8 331.6 415.6 343.6 414.9 328.2 415.0ZM347.6 415.5 363.8 415.3 374.9 414.5 359.2 414.7ZM380.3 415.1 396.9 414.9 406.9 414.2 390.8 414.4ZM413.7 414.8 430.8 414.6 439.7 413.8 423.2 414.0ZM448.0 414.4 465.5 414.2 473.3 413.4 456.4 413.6ZM483.2 414.0 501.1 413.8 507.7 413.1 490.4 413.3ZM519.2 413.6 537.5 413.4 542.9 412.7 525.2 412.9ZM556.1 413.2 574.9 413.0 579.0 412.3 560.8 412.5ZM594.0 412.8 613.3 412.6 615.9 411.9 597.3 412.1ZM632.9 412.4 652.7 412.2 653.8 411.5 634.8 411.7ZM672.8 412.0 693.1 411.7 692.7 411.0 673.2 411.2ZM713.8 411.5 734.7 411.3 732.6 410.6 712.5 410.8ZM755.9 411.1 777.3 410.8 773.6 410.1 753.0 410.4ZM799.1 410.6 821.2 410.4 815.6 409.7 794.4 409.9ZM843.6 410.1 866.3 409.9 858.8 409.2 837.0 409.4ZM889.3 409.6 912.6 409.4 903.1 408.7 880.8 409.0ZM936.3 409.1 960.3 408.9 948.7 408.2 925.7 408.5ZM984.7 408.6 1009.5 408.3 995.5 407.7 971.9 407.9ZM1034.6 408.1 1060.0 407.8 1043.7 407.2 1019.5 407.4ZM1085.9 407.5 1112.1 407.2 1093.3 406.6 1068.4 406.9ZM1138.8 406.9 1165.8 406.6 1144.4 406.0 1118.7 406.3ZM1193.3 406.3 1221.2 406.0 1196.9 405.5 1170.5 405.8ZM-30.3 419.0 -18.7 418.9 1.6 418.1 -9.7 418.3ZM-7.0 418.7 4.8 418.6 24.6 417.9 13.1 418.0ZM16.7 418.5 28.8 418.4 48.1 417.6 36.3 417.7ZM41.0 418.2 53.3 418.1 72.0 417.3 60.0 417.5ZM65.7 417.9 78.2 417.8 96.4 417.1 84.1 417.2ZM90.9 417.7 103.7 417.5 121.3 416.8 108.8 416.9ZM116.6 417.4 129.7 417.2 146.7 416.5 133.9 416.6ZM142.9 417.1 156.3 416.9 172.6 416.2 159.6 416.4ZM169.8 416.8 183.4 416.6 199.0 415.9 185.7 416.1ZM197.2 416.5 211.1 416.3 226.0 415.6 212.5 415.8ZM225.2 416.2 239.4 416.0 253.6 415.3 239.7 415.5ZM253.8 415.9 268.4 415.7 281.8 415.0 267.6 415.1ZM283.1 415.5 298.0 415.4 310.5 414.7 296.1 414.8ZM313.0 415.2 328.2 415.0 339.9 414.3 325.2 414.5ZM343.6 414.9 359.2 414.7 370.0 414.0 354.9 414.2ZM374.9 414.5 390.8 414.4 400.7 413.6 385.3 413.8ZM406.9 414.2 423.2 414.0 432.1 413.3 416.3 413.5ZM439.7 413.8 456.4 413.6 464.2 412.9 448.1 413.1ZM473.3 413.4 490.4 413.3 497.1 412.6 480.6 412.7ZM507.7 413.1 525.2 412.9 530.7 412.2 513.8 412.4ZM542.9 412.7 560.8 412.5 565.2 411.8 547.8 412.0ZM579.0 412.3 597.3 412.1 600.4 411.4 582.7 411.6ZM615.9 411.9 634.8 411.7 636.5 411.0 618.4 411.2ZM653.8 411.5 673.2 411.2 673.5 410.6 654.9 410.8ZM692.7 411.0 712.5 410.8 711.4 410.1 692.4 410.4ZM732.6 410.6 753.0 410.4 750.3 409.7 730.7 409.9ZM773.6 410.1 794.4 409.9 790.1 409.3 770.1 409.5ZM815.6 409.7 837.0 409.4 831.0 408.8 810.4 409.0ZM858.8 409.2 880.8 409.0 873.0 408.3 851.8 408.6ZM903.1 408.7 925.7 408.5 916.0 407.8 894.3 408.1ZM948.7 408.2 971.9 407.9 960.2 407.4 938.0 407.6ZM995.5 407.7 1019.5 407.4 1005.6 406.8 982.8 407.1ZM1043.7 407.2 1068.4 406.9 1052.3 406.3 1028.8 406.6ZM1093.3 406.6 1118.7 406.3 1100.2 405.8 1076.1 406.0ZM1144.4 406.0 1170.5 405.8 1149.6 405.2 1124.7 405.5ZM1196.9 405.5 1223.8 405.2 1200.3 404.6 1174.7 404.9ZM-21.0 418.4 -9.7 418.3 9.6 417.6 -1.4 417.7ZM1.6 418.1 13.1 418.0 32.0 417.3 20.8 417.4ZM24.6 417.9 36.3 417.7 54.7 417.1 43.3 417.2ZM48.1 417.6 60.0 417.5 77.9 416.8 66.3 416.9ZM72.0 417.3 84.1 417.2 101.5 416.5 89.7 416.7ZM96.4 417.1 108.8 416.9 125.6 416.2 113.5 416.4ZM121.3 416.8 133.9 416.6 150.2 416.0 137.8 416.1ZM146.7 416.5 159.6 416.4 175.2 415.7 162.6 415.8ZM172.6 416.2 185.7 416.1 200.8 415.4 187.9 415.5ZM199.0 415.9 212.5 415.8 226.8 415.1 213.7 415.2ZM226.0 415.6 239.7 415.5 253.4 414.8 240.0 414.9ZM253.6 415.3 267.6 415.1 280.5 414.5 266.9 414.6ZM281.8 415.0 296.1 414.8 308.2 414.1 294.3 414.3ZM310.5 414.7 325.2 414.5 336.5 413.8 322.3 414.0ZM339.9 414.3 354.9 414.2 365.4 413.5 350.9 413.7ZM370.0 414.0 385.3 413.8 394.9 413.2 380.1 413.3ZM400.7 413.6 416.3 413.5 425.1 412.8 409.9 413.0ZM432.1 413.3 448.1 413.1 455.9 412.5 440.4 412.6ZM464.2 412.9 480.6 412.7 487.4 412.1 471.5 412.3ZM497.1 412.6 513.8 412.4 519.5 411.7 503.4 411.9ZM530.7 412.2 547.8 412.0 552.5 411.3 535.9 411.5ZM565.2 411.8 582.7 411.6 586.2 411.0 569.2 411.2ZM600.4 411.4 618.4 411.2 620.6 410.6 603.3 410.8ZM636.5 411.0 654.9 410.8 655.9 410.2 638.1 410.4ZM673.5 410.6 692.4 410.4 692.0 409.8 673.8 410.0ZM711.4 410.1 730.7 409.9 729.0 409.3 710.4 409.5ZM750.3 409.7 770.1 409.5 766.9 408.9 747.8 409.1ZM790.1 409.3 810.4 409.0 805.7 408.4 786.1 408.7ZM831.0 408.8 851.8 408.6 845.5 408.0 825.4 408.2ZM873.0 408.3 894.3 408.1 886.2 407.5 865.7 407.8ZM916.0 407.8 938.0 407.6 928.1 407.0 907.0 407.3ZM960.2 407.4 982.8 407.1 971.0 406.6 949.4 406.8ZM1005.6 406.8 1028.8 406.6 1015.0 406.1 992.9 406.3ZM1052.3 406.3 1076.1 406.0 1060.2 405.5 1037.5 405.8ZM1100.2 405.8 1124.7 405.5 1106.7 405.0 1083.3 405.3ZM1149.6 405.2 1174.7 404.9 1154.4 404.5 1130.4 404.7ZM1200.3 404.6 1226.2 404.4 1203.4 403.9 1178.7 404.2ZM-12.3 417.8 -1.4 417.7 17.2 417.0 6.5 417.2ZM9.6 417.6 20.8 417.4 38.9 416.8 28.0 416.9ZM32.0 417.3 43.3 417.2 60.9 416.5 49.8 416.7ZM54.7 417.1 66.3 416.9 83.4 416.3 72.1 416.4ZM77.9 416.8 89.7 416.7 106.3 416.0 94.8 416.1ZM101.5 416.5 113.5 416.4 129.7 415.7 117.9 415.9ZM125.6 416.2 137.8 416.1 153.4 415.4 141.5 415.6ZM150.2 416.0 162.6 415.8 177.7 415.2 165.5 415.3ZM175.2 415.7 187.9 415.5 202.4 414.9 190.0 415.0ZM200.8 415.4 213.7 415.2 227.5 414.6 214.9 414.7ZM226.8 415.1 240.0 414.9 253.2 414.3 240.3 414.4ZM253.4 414.8 266.9 414.6 279.4 414.0 266.2 414.1ZM280.5 414.5 294.3 414.3 306.1 413.7 292.7 413.8ZM308.2 414.1 322.3 414.0 333.4 413.4 319.7 413.5ZM336.5 413.8 350.9 413.7 361.2 413.0 347.2 413.2ZM365.4 413.5 380.1 413.3 389.6 412.7 375.3 412.9ZM394.9 413.2 409.9 413.0 418.5 412.4 404.0 412.5ZM425.1 412.8 440.4 412.6 448.1 412.0 433.2 412.2ZM455.9 412.5 471.5 412.3 478.3 411.7 463.1 411.8ZM487.4 412.1 503.4 411.9 509.2 411.3 493.7 411.5ZM519.5 411.7 535.9 411.5 540.8 410.9 524.9 411.1ZM552.5 411.3 569.2 411.2 573.0 410.6 556.8 410.8ZM586.2 411.0 603.3 410.8 606.0 410.2 589.4 410.4ZM620.6 410.6 638.1 410.4 639.7 409.8 622.7 410.0ZM655.9 410.2 673.8 410.0 674.1 409.4 656.8 409.6ZM692.0 409.8 710.4 409.5 709.4 409.0 691.7 409.2ZM729.0 409.3 747.8 409.1 745.5 408.6 727.3 408.8ZM766.9 408.9 786.1 408.7 782.4 408.1 763.9 408.3ZM805.7 408.4 825.4 408.2 820.3 407.7 801.2 407.9ZM845.5 408.0 865.7 407.8 859.0 407.2 839.5 407.5ZM886.2 407.5 907.0 407.3 898.7 406.8 878.7 407.0ZM928.1 407.0 949.4 406.8 939.4 406.3 918.9 406.5ZM971.0 406.6 992.9 406.3 981.1 405.8 960.1 406.1ZM1015.0 406.1 1037.5 405.8 1023.8 405.3 1002.3 405.6ZM1060.2 405.5 1083.3 405.3 1067.7 404.8 1045.6 405.1ZM1106.7 405.0 1130.4 404.7 1112.7 404.3 1090.0 404.5ZM1154.4 404.5 1178.7 404.2 1158.9 403.7 1135.6 404.0ZM1203.4 403.9 1228.4 403.6 1206.3 403.2 1182.4 403.5ZM-25.1 417.5 -14.6 417.4 3.5 416.8 -6.7 416.9ZM-4.1 417.3 6.5 417.2 24.2 416.5 13.8 416.7ZM17.2 417.0 28.0 416.9 45.3 416.3 34.7 416.4ZM38.9 416.8 49.8 416.7 66.8 416.0 56.0 416.2ZM60.9 416.5 72.1 416.4 88.6 415.8 77.6 415.9ZM83.4 416.3 94.8 416.1 110.8 415.5 99.7 415.6ZM106.3 416.0 117.9 415.9 133.4 415.2 122.1 415.4ZM129.7 415.7 141.5 415.6 156.5 415.0 144.9 415.1ZM153.4 415.4 165.5 415.3 180.0 414.7 168.2 414.8ZM177.7 415.2 190.0 415.0 203.9 414.4 191.9 414.5ZM202.4 414.9 214.9 414.7 228.2 414.1 216.0 414.3ZM227.5 414.6 240.3 414.4 253.0 413.8 240.6 414.0ZM253.2 414.3 266.2 414.1 278.3 413.5 265.6 413.7ZM279.4 414.0 292.7 413.8 304.1 413.2 291.2 413.4ZM306.1 413.7 319.7 413.5 330.4 412.9 317.2 413.1ZM333.4 413.4 347.2 413.2 357.2 412.6 343.8 412.8ZM361.2 413.0 375.3 412.9 384.6 412.3 370.8 412.4ZM389.6 412.7 404.0 412.5 412.5 411.9 398.4 412.1ZM418.5 412.4 433.2 412.2 440.9 411.6 426.6 411.8ZM448.1 412.0 463.1 411.8 470.0 411.3 455.4 411.4ZM478.3 411.7 493.7 411.5 499.6 410.9 484.7 411.1ZM509.2 411.3 524.9 411.1 529.9 410.6 514.7 410.7ZM540.8 410.9 556.8 410.8 560.8 410.2 545.3 410.4ZM573.0 410.6 589.4 410.4 592.4 409.8 576.5 410.0ZM606.0 410.2 622.7 410.0 624.7 409.4 608.5 409.6ZM639.7 409.8 656.8 409.6 657.7 409.0 641.1 409.2ZM674.1 409.4 691.7 409.2 691.4 408.6 674.4 408.8ZM709.4 409.0 727.3 408.8 725.8 408.2 708.5 408.4ZM745.5 408.6 763.9 408.3 761.1 407.8 743.4 408.0ZM782.4 408.1 801.2 407.9 797.1 407.4 779.0 407.6ZM820.3 407.7 839.5 407.5 834.0 407.0 815.5 407.2ZM859.0 407.2 878.7 407.0 871.8 406.5 852.8 406.7ZM898.7 406.8 918.9 406.5 910.4 406.1 891.0 406.3ZM939.4 406.3 960.1 406.1 950.0 405.6 930.1 405.8ZM981.1 405.8 1002.3 405.6 990.5 405.1 970.1 405.4ZM1023.8 405.3 1045.6 405.1 1032.1 404.6 1011.2 404.9ZM1067.7 404.8 1090.0 404.5 1074.7 404.1 1053.2 404.4ZM1112.7 404.3 1135.6 404.0 1118.3 403.6 1096.4 403.9ZM1158.9 403.7 1182.4 403.5 1163.1 403.1 1140.6 403.3ZM1206.3 403.2 1230.5 402.9 1209.0 402.5 1185.9 402.8ZM-16.8 417.0 -6.7 416.9 10.7 416.3 0.8 416.4ZM3.5 416.8 13.8 416.7 30.9 416.1 20.8 416.2ZM24.2 416.5 34.7 416.4 51.4 415.8 41.1 415.9ZM45.3 416.3 56.0 416.2 72.2 415.6 61.8 415.7ZM66.8 416.0 77.6 415.9 93.5 415.3 82.8 415.4ZM88.6 415.8 99.7 415.6 115.0 415.1 104.2 415.2ZM110.8 415.5 122.1 415.4 137.0 414.8 126.0 414.9ZM133.4 415.2 144.9 415.1 159.4 414.5 148.1 414.7ZM156.5 415.0 168.2 414.8 182.1 414.2 170.7 414.4ZM180.0 414.7 191.9 414.5 205.3 414.0 193.6 414.1ZM203.9 414.4 216.0 414.3 228.9 413.7 217.0 413.8ZM228.2 414.1 240.6 414.0 252.9 413.4 240.8 413.5ZM253.0 413.8 265.6 413.7 277.3 413.1 265.1 413.3ZM278.3 413.5 291.2 413.4 302.3 412.8 289.7 413.0ZM304.1 413.2 317.2 413.1 327.7 412.5 314.9 412.7ZM330.4 412.9 343.8 412.8 353.5 412.2 340.5 412.3ZM357.2 412.6 370.8 412.4 379.9 411.9 366.7 412.0ZM384.6 412.3 398.4 412.1 406.8 411.6 393.3 411.7ZM412.5 411.9 426.6 411.8 434.2 411.2 420.5 411.4ZM440.9 411.6 455.4 411.4 462.2 410.9 448.2 411.1ZM470.0 411.3 484.7 411.1 490.7 410.5 476.4 410.7ZM499.6 410.9 514.7 410.7 519.8 410.2 505.2 410.4ZM529.9 410.6 545.3 410.4 549.5 409.8 534.6 410.0ZM560.8 410.2 576.5 410.0 579.9 409.5 564.6 409.7ZM592.4 409.8 608.5 409.6 610.8 409.1 595.3 409.3ZM624.7 409.4 641.1 409.2 642.4 408.7 626.5 408.9ZM657.7 409.0 674.4 408.8 674.7 408.3 658.5 408.5ZM691.4 408.6 708.5 408.4 707.7 408.0 691.1 408.1ZM725.8 408.2 743.4 408.0 741.3 407.5 724.4 407.8ZM761.1 407.8 779.0 407.6 775.8 407.1 758.5 407.3ZM797.1 407.4 815.5 407.2 811.0 406.7 793.3 406.9ZM834.0 407.0 852.8 406.7 847.0 406.3 828.9 406.5ZM871.8 406.5 891.0 406.3 883.8 405.8 865.3 406.1ZM910.4 406.1 930.1 405.8 921.5 405.4 902.5 405.6ZM950.0 405.6 970.1 405.4 960.0 404.9 940.6 405.2ZM990.5 405.1 1011.2 404.9 999.4 404.5 979.6 404.7ZM1032.1 404.6 1053.2 404.4 1039.8 404.0 1019.5 404.2ZM1074.7 404.1 1096.4 403.9 1081.2 403.5 1060.4 403.7ZM1118.3 403.6 1140.6 403.3 1123.6 403.0 1102.3 403.2ZM1163.1 403.1 1185.9 402.8 1167.0 402.4 1145.2 402.7ZM1209.0 402.5 1232.4 402.3 1211.6 401.9 1189.2 402.2ZM-9.1 416.5 0.8 416.4 17.5 415.9 7.8 416.0ZM10.7 416.3 20.8 416.2 37.1 415.6 27.3 415.7ZM30.9 416.1 41.1 415.9 57.1 415.4 47.1 415.5ZM51.4 415.8 61.8 415.7 77.4 415.1 67.2 415.2ZM72.2 415.6 82.8 415.4 98.0 414.9 87.7 415.0ZM93.5 415.3 104.2 415.2 119.0 414.6 108.5 414.7ZM115.0 415.1 126.0 414.9 140.3 414.4 129.6 414.5ZM137.0 414.8 148.1 414.7 162.0 414.1 151.1 414.2ZM159.4 414.5 170.7 414.4 184.1 413.8 173.0 414.0ZM182.1 414.2 193.6 414.1 206.6 413.6 195.3 413.7ZM205.3 414.0 217.0 413.8 229.5 413.3 218.0 413.4ZM228.9 413.7 240.8 413.5 252.7 413.0 241.0 413.1ZM252.9 413.4 265.1 413.3 276.4 412.7 264.5 412.9ZM277.3 413.1 289.7 413.0 300.5 412.4 288.4 412.6ZM302.3 412.8 314.9 412.7 325.1 412.1 312.8 412.3ZM327.7 412.5 340.5 412.3 350.1 411.8 337.5 412.0ZM353.5 412.2 366.7 412.0 375.6 411.5 362.8 411.7ZM379.9 411.9 393.3 411.7 401.5 411.2 388.5 411.4ZM406.8 411.6 420.5 411.4 428.0 410.9 414.7 411.0ZM434.2 411.2 448.2 411.1 455.0 410.5 441.4 410.7ZM462.2 410.9 476.4 410.7 482.4 410.2 468.6 410.4ZM490.7 410.5 505.2 410.4 510.5 409.9 496.4 410.0ZM519.8 410.2 534.6 410.0 539.0 409.5 524.7 409.7ZM549.5 409.8 564.6 409.7 568.2 409.2 553.5 409.3ZM579.9 409.5 595.3 409.3 597.9 408.8 583.0 409.0ZM610.8 409.1 626.5 408.9 628.3 408.4 613.0 408.6ZM642.4 408.7 658.5 408.5 659.2 408.1 643.7 408.3ZM674.7 408.3 691.1 408.1 690.8 407.7 674.9 407.9ZM707.7 408.0 724.4 407.8 723.1 407.3 706.9 407.5ZM741.3 407.5 758.5 407.3 756.0 406.9 739.5 407.1ZM775.8 407.1 793.3 406.9 789.7 406.5 772.8 406.7ZM811.0 406.7 828.9 406.5 824.1 406.1 806.8 406.3ZM847.0 406.3 865.3 406.1 859.2 405.6 841.6 405.9ZM883.8 405.8 902.5 405.6 895.1 405.2 877.1 405.4ZM921.5 405.4 940.6 405.2 931.9 404.8 913.4 405.0ZM960.0 404.9 979.6 404.7 969.4 404.3 950.5 404.5ZM999.4 404.5 1019.5 404.2 1007.8 403.8 988.5 404.1ZM1039.8 404.0 1060.4 403.7 1047.1 403.4 1027.4 403.6ZM1081.2 403.5 1102.3 403.2 1087.4 402.9 1067.1 403.1ZM1123.6 403.0 1145.2 402.7 1128.6 402.4 1107.8 402.6ZM1167.0 402.4 1189.2 402.2 1170.7 401.9 1149.5 402.1ZM1211.6 401.9 1234.2 401.6 1213.9 401.3 1192.2 401.6ZM-20.8 416.3 -11.4 416.2 5.1 415.7 -4.2 415.8ZM-1.8 416.1 7.8 416.0 23.9 415.4 14.5 415.5ZM17.5 415.9 27.3 415.7 43.1 415.2 33.5 415.3ZM37.1 415.6 47.1 415.5 62.5 415.0 52.7 415.1ZM57.1 415.4 67.2 415.2 82.3 414.7 72.3 414.8ZM77.4 415.1 87.7 415.0 102.3 414.5 92.3 414.6ZM98.0 414.9 108.5 414.7 122.7 414.2 112.5 414.3ZM119.0 414.6 129.6 414.5 143.5 414.0 133.1 414.1ZM140.3 414.4 151.1 414.2 164.6 413.7 154.0 413.8ZM162.0 414.1 173.0 414.0 186.0 413.4 175.3 413.6ZM184.1 413.8 195.3 413.7 207.8 413.2 196.9 413.3ZM206.6 413.6 218.0 413.4 230.0 412.9 218.9 413.0ZM229.5 413.3 241.0 413.1 252.6 412.6 241.2 412.8ZM252.7 413.0 264.5 412.9 275.5 412.3 264.0 412.5ZM276.4 412.7 288.4 412.6 298.9 412.1 287.2 412.2ZM300.5 412.4 312.8 412.3 322.7 411.8 310.7 411.9ZM325.1 412.1 337.5 412.0 346.9 411.5 334.7 411.6ZM350.1 411.8 362.8 411.7 371.5 411.2 359.2 411.3ZM375.6 411.5 388.5 411.4 396.6 410.9 384.0 411.0ZM401.5 411.2 414.7 411.0 422.2 410.5 409.3 410.7ZM428.0 410.9 441.4 410.7 448.2 410.2 435.1 410.4ZM455.0 410.5 468.6 410.4 474.7 409.9 461.4 410.1ZM482.4 410.2 496.4 410.0 501.7 409.6 488.1 409.7ZM510.5 409.9 524.7 409.7 529.2 409.2 515.4 409.4ZM539.0 409.5 553.5 409.3 557.3 408.9 543.2 409.1ZM568.2 409.2 583.0 409.0 585.9 408.5 571.5 408.7ZM597.9 408.8 613.0 408.6 615.1 408.2 600.4 408.4ZM628.3 408.4 643.7 408.3 644.8 407.8 629.9 408.0ZM659.2 408.1 674.9 407.9 675.2 407.4 659.9 407.6ZM690.8 407.7 706.9 407.5 706.1 407.1 690.6 407.2ZM723.1 407.3 739.5 407.1 737.7 406.7 721.8 406.9ZM756.0 406.9 772.8 406.7 770.0 406.3 753.7 406.5ZM789.7 406.5 806.8 406.3 802.9 405.9 786.3 406.1ZM824.1 406.1 841.6 405.9 836.5 405.5 819.6 405.7ZM859.2 405.6 877.1 405.4 870.8 405.0 853.6 405.2ZM895.1 405.2 913.4 405.0 905.9 404.6 888.2 404.8ZM931.9 404.8 950.5 404.5 941.7 404.2 923.7 404.4ZM969.4 404.3 988.5 404.1 978.3 403.7 959.9 403.9ZM1007.8 403.8 1027.4 403.6 1015.8 403.3 996.9 403.5ZM1047.1 403.4 1067.1 403.1 1054.0 402.8 1034.8 403.0ZM1087.4 402.9 1107.8 402.6 1093.2 402.3 1073.5 402.5ZM1128.6 402.4 1149.5 402.1 1133.2 401.8 1113.1 402.1ZM1170.7 401.9 1192.2 401.6 1174.2 401.3 1153.6 401.6ZM1213.9 401.3 1235.9 401.1 1216.2 400.8 1195.1 401.1ZM-13.5 415.9 -4.2 415.8 11.6 415.3 2.5 415.4ZM5.1 415.7 14.5 415.5 30.0 415.0 20.8 415.1ZM23.9 415.4 33.5 415.3 48.6 414.8 39.3 414.9ZM43.1 415.2 52.7 415.1 67.6 414.6 58.1 414.7ZM62.5 415.0 72.3 414.8 86.8 414.3 77.2 414.4ZM82.3 414.7 92.3 414.6 106.4 414.1 96.6 414.2ZM102.3 414.5 112.5 414.3 126.3 413.8 116.3 414.0ZM122.7 414.2 133.1 414.1 146.4 413.6 136.3 413.7ZM143.5 414.0 154.0 413.8 167.0 413.3 156.7 413.5ZM164.6 413.7 175.3 413.6 187.8 413.1 177.3 413.2ZM186.0 413.4 196.9 413.3 209.0 412.8 198.4 412.9ZM207.8 413.2 218.9 413.0 230.5 412.5 219.7 412.7ZM230.0 412.9 241.2 412.8 252.4 412.3 241.4 412.4ZM252.6 412.6 264.0 412.5 274.7 412.0 263.5 412.1ZM275.5 412.3 287.2 412.2 297.4 411.7 286.0 411.9ZM298.9 412.1 310.7 411.9 320.4 411.4 308.8 411.6ZM322.7 411.8 334.7 411.6 343.9 411.1 332.1 411.3ZM346.9 411.5 359.2 411.3 367.7 410.8 355.7 411.0ZM371.5 411.2 384.0 411.0 392.0 410.5 379.8 410.7ZM396.6 410.9 409.3 410.7 416.7 410.2 404.3 410.4ZM422.2 410.5 435.1 410.4 441.8 409.9 429.2 410.1ZM448.2 410.2 461.4 410.1 467.5 409.6 454.6 409.8ZM474.7 409.9 488.1 409.7 493.5 409.3 480.4 409.4ZM501.7 409.6 515.4 409.4 520.1 408.9 506.7 409.1ZM529.2 409.2 543.2 409.1 547.1 408.6 533.6 408.8ZM557.3 408.9 571.5 408.7 574.7 408.3 560.9 408.4ZM585.9 408.5 600.4 408.4 602.8 407.9 588.7 408.1ZM615.1 408.2 629.9 408.0 631.4 407.6 617.0 407.7ZM644.8 407.8 659.9 407.6 660.6 407.2 645.9 407.4ZM675.2 407.4 690.6 407.2 690.3 406.8 675.4 407.0ZM706.1 407.1 721.8 406.9 720.7 406.5 705.4 406.6ZM737.7 406.7 753.7 406.5 751.6 406.1 736.1 406.3ZM770.0 406.3 786.3 406.1 783.2 405.7 767.3 405.9ZM802.9 405.9 819.6 405.7 815.4 405.3 799.2 405.5ZM836.5 405.5 853.6 405.2 848.2 404.9 831.7 405.1ZM870.8 405.0 888.2 404.8 881.8 404.5 864.9 404.7ZM905.9 404.6 923.7 404.4 916.0 404.0 898.8 404.2ZM941.7 404.2 959.9 403.9 951.0 403.6 933.4 403.8ZM978.3 403.7 996.9 403.5 986.7 403.2 968.8 403.4ZM1015.8 403.3 1034.8 403.0 1023.2 402.7 1004.9 402.9ZM1054.0 402.8 1073.5 402.5 1060.5 402.2 1041.8 402.5ZM1093.2 402.3 1113.1 402.1 1098.7 401.8 1079.5 402.0ZM1133.2 401.8 1153.6 401.6 1137.6 401.3 1118.1 401.5ZM1174.2 401.3 1195.1 401.1 1177.5 400.8 1157.5 401.0ZM1216.2 400.8 1237.5 400.5 1218.3 400.3 1197.8 400.5ZM-24.3 415.7 -15.4 415.6 0.1 415.1 -8.6 415.2ZM-6.5 415.5 2.5 415.4 17.8 414.9 8.9 415.0ZM11.6 415.3 20.8 415.1 35.7 414.6 26.7 414.8ZM30.0 415.0 39.3 414.9 53.9 414.4 44.8 414.5ZM48.6 414.8 58.1 414.7 72.4 414.2 63.1 414.3ZM67.6 414.6 77.2 414.4 91.2 414.0 81.8 414.1ZM86.8 414.3 96.6 414.2 110.2 413.7 100.7 413.8ZM106.4 414.1 116.3 414.0 129.6 413.5 119.9 413.6ZM126.3 413.8 136.3 413.7 149.2 413.2 139.4 413.3ZM146.4 413.6 156.7 413.5 169.2 413.0 159.2 413.1ZM167.0 413.3 177.3 413.2 189.5 412.7 179.3 412.8ZM187.8 413.1 198.4 412.9 210.1 412.5 199.8 412.6ZM209.0 412.8 219.7 412.7 231.0 412.2 220.5 412.3ZM230.5 412.5 241.4 412.4 252.3 411.9 241.6 412.1ZM252.4 412.3 263.5 412.1 273.9 411.7 263.1 411.8ZM274.7 412.0 286.0 411.9 295.9 411.4 284.9 411.5ZM297.4 411.7 308.8 411.6 318.3 411.1 307.1 411.2ZM320.4 411.4 332.1 411.3 341.0 410.8 329.6 411.0ZM343.9 411.1 355.7 411.0 364.1 410.5 352.5 410.7ZM367.7 410.8 379.8 410.7 387.6 410.2 375.8 410.4ZM392.0 410.5 404.3 410.4 411.6 409.9 399.6 410.1ZM416.7 410.2 429.2 410.1 435.9 409.6 423.7 409.8ZM441.8 409.9 454.6 409.8 460.7 409.3 448.2 409.5ZM467.5 409.6 480.4 409.4 485.9 409.0 473.2 409.2ZM493.5 409.3 506.7 409.1 511.5 408.7 498.6 408.8ZM520.1 408.9 533.6 408.8 537.6 408.4 524.5 408.5ZM547.1 408.6 560.9 408.4 564.2 408.0 550.9 408.2ZM574.7 408.3 588.7 408.1 591.3 407.7 577.7 407.9ZM602.8 407.9 617.0 407.7 618.9 407.3 605.0 407.5ZM631.4 407.6 645.9 407.4 647.0 407.0 632.8 407.2ZM660.6 407.2 675.4 407.0 675.6 406.6 661.2 406.8ZM690.3 406.8 705.4 406.6 704.8 406.3 690.1 406.4ZM720.7 406.5 736.1 406.3 734.5 405.9 719.6 406.1ZM751.6 406.1 767.3 405.9 764.8 405.5 749.6 405.7ZM783.2 405.7 799.2 405.5 795.7 405.1 780.2 405.3ZM815.4 405.3 831.7 405.1 827.2 404.7 811.4 404.9ZM848.2 404.9 864.9 404.7 859.4 404.3 843.2 404.5ZM881.8 404.5 898.8 404.2 892.2 403.9 875.7 404.1ZM916.0 404.0 933.4 403.8 925.7 403.5 908.8 403.7ZM951.0 403.6 968.8 403.4 959.8 403.1 942.7 403.3ZM986.7 403.2 1004.9 402.9 994.7 402.6 977.2 402.8ZM1023.2 402.7 1041.8 402.5 1030.3 402.2 1012.4 402.4ZM1060.5 402.2 1079.5 402.0 1066.7 401.7 1048.4 402.0ZM1098.7 401.8 1118.1 401.5 1103.9 401.3 1085.2 401.5ZM1137.6 401.3 1157.5 401.0 1141.8 400.8 1122.7 401.0ZM-17.3 415.3 -8.6 415.2 6.4 414.7 -2.1 414.8ZM0.1 415.1 8.9 415.0 23.7 414.5 15.0 414.6ZM17.8 414.9 26.7 414.8 41.2 414.3 32.4 414.4ZM35.7 414.6 44.8 414.5 59.0 414.1 50.0 414.2ZM53.9 414.4 63.1 414.3 77.0 413.8 67.9 413.9ZM72.4 414.2 81.8 414.1 95.3 413.6 86.1 413.7ZM91.2 414.0 100.7 413.8 113.9 413.4 104.6 413.5ZM110.2 413.7 119.9 413.6 132.7 413.1 123.3 413.2ZM129.6 413.5 139.4 413.3 151.9 412.9 142.3 413.0ZM149.2 413.2 159.2 413.1 171.3 412.6 161.6 412.8ZM169.2 413.0 179.3 412.8 191.1 412.4 181.2 412.5ZM189.5 412.7 199.8 412.6 211.1 412.1 201.1 412.3ZM210.1 412.5 220.5 412.3 231.5 411.9 221.3 412.0ZM231.0 412.2 241.6 412.1 252.2 411.6 241.8 411.7ZM252.3 411.9 263.1 411.8 273.2 411.4 262.7 411.5ZM273.9 411.7 284.9 411.5 294.6 411.1 283.9 411.2ZM295.9 411.4 307.1 411.2 316.3 410.8 305.4 410.9ZM318.3 411.1 329.6 411.0 338.3 410.5 327.3 410.7ZM341.0 410.8 352.5 410.7 360.8 410.2 349.5 410.4ZM364.1 410.5 375.8 410.4 383.6 410.0 372.1 410.1ZM387.6 410.2 399.6 410.1 406.7 409.7 395.1 409.8ZM411.6 409.9 423.7 409.8 430.3 409.4 418.5 409.5ZM435.9 409.6 448.2 409.5 454.3 409.1 442.2 409.2ZM460.7 409.3 473.2 409.2 478.6 408.8 466.4 408.9ZM485.9 409.0 498.6 408.8 503.5 408.4 491.0 408.6ZM511.5 408.7 524.5 408.5 528.7 408.1 516.0 408.3ZM537.6 408.4 550.9 408.2 554.4 407.8 541.5 408.0ZM564.2 408.0 577.7 407.9 580.5 407.5 567.4 407.6ZM591.3 407.7 605.0 407.5 607.1 407.1 593.8 407.3ZM618.9 407.3 632.8 407.2 634.2 406.8 620.6 407.0ZM647.0 407.0 661.2 406.8 661.8 406.4 647.9 406.6ZM675.6 406.6 690.1 406.4 689.9 406.1 675.8 406.3ZM704.8 406.3 719.6 406.1 718.5 405.7 704.1 405.9ZM734.5 405.9 749.6 405.7 747.7 405.3 733.0 405.5ZM764.8 405.5 780.2 405.3 777.4 405.0 762.5 405.2ZM795.7 405.1 811.4 404.9 807.7 404.6 792.5 404.8ZM827.2 404.7 843.2 404.5 838.5 404.2 823.0 404.4ZM859.4 404.3 875.7 404.1 870.0 403.8 854.2 404.0ZM892.2 403.9 908.8 403.7 902.1 403.4 886.0 403.6ZM925.7 403.5 942.7 403.3 934.8 403.0 918.4 403.2ZM959.8 403.1 977.2 402.8 968.2 402.6 951.4 402.8ZM994.7 402.6 1012.4 402.4 1002.3 402.1 985.2 402.3ZM-10.6 414.9 -2.1 414.8 12.4 414.4 4.0 414.5ZM6.4 414.7 15.0 414.6 29.2 414.2 20.8 414.3ZM23.7 414.5 32.4 414.4 46.4 413.9 37.8 414.1ZM41.2 414.3 50.0 414.2 63.7 413.7 55.0 413.8ZM59.0 414.1 67.9 413.9 81.3 413.5 72.5 413.6ZM77.0 413.8 86.1 413.7 99.2 413.3 90.2 413.4ZM95.3 413.6 104.6 413.5 117.3 413.0 108.2 413.2ZM113.9 413.4 123.3 413.2 135.7 412.8 126.5 412.9ZM132.7 413.1 142.3 413.0 154.4 412.6 145.0 412.7ZM151.9 412.9 161.6 412.8 173.4 412.3 163.9 412.4ZM171.3 412.6 181.2 412.5 192.6 412.1 182.9 412.2ZM191.1 412.4 201.1 412.3 212.1 411.8 202.3 412.0ZM211.1 412.1 221.3 412.0 232.0 411.6 222.0 411.7ZM231.5 411.9 241.8 411.7 252.1 411.3 242.0 411.4ZM252.2 411.6 262.7 411.5 272.5 411.1 262.3 411.2ZM273.2 411.4 283.9 411.2 293.3 410.8 282.9 410.9ZM294.6 411.1 305.4 410.9 314.4 410.5 303.8 410.7ZM316.3 410.8 327.3 410.7 335.8 410.2 325.0 410.4ZM338.3 410.5 349.5 410.4 357.6 410.0 346.6 410.1ZM360.8 410.2 372.1 410.1 379.7 409.7 368.6 409.8ZM383.6 410.0 395.1 409.8 402.2 409.4 390.9 409.5ZM406.7 409.7 418.5 409.5 425.0 409.1 413.6 409.3ZM430.3 409.4 442.2 409.2 448.2 408.8 436.6 409.0ZM454.3 409.1 466.4 408.9 471.9 408.5 460.0 408.7ZM478.6 408.8 491.0 408.6 495.9 408.2 483.8 408.4ZM503.5 408.4 516.0 408.3 520.3 407.9 508.0 408.0ZM528.7 408.1 541.5 408.0 545.1 407.6 532.7 407.7ZM554.4 407.8 567.4 407.6 570.4 407.3 557.7 407.4ZM580.5 407.5 593.8 407.3 596.1 406.9 583.2 407.1ZM607.1 407.1 620.6 407.0 622.3 406.6 609.1 406.8ZM634.2 406.8 647.9 406.6 648.9 406.3 635.5 406.4ZM661.8 406.4 675.8 406.3 676.0 405.9 662.4 406.1ZM689.9 406.1 704.1 405.9 703.6 405.6 689.7 405.7ZM718.5 405.7 733.0 405.5 731.6 405.2 717.5 405.4ZM747.7 405.3 762.5 405.2 760.2 404.8 745.9 405.0ZM777.4 405.0 792.5 404.8 789.4 404.5 774.7 404.6ZM807.7 404.6 823.0 404.4 819.0 404.1 804.1 404.3ZM838.5 404.2 854.2 404.0 849.3 403.7 834.1 403.9ZM-20.7 414.8 -12.5 414.7 1.7 414.3 -6.3 414.4ZM-4.3 414.6 4.0 414.5 18.0 414.0 9.9 414.2ZM12.4 414.4 20.8 414.3 34.5 413.8 26.3 413.9ZM29.2 414.2 37.8 414.1 51.3 413.6 42.9 413.7ZM46.4 413.9 55.0 413.8 68.3 413.4 59.7 413.5ZM63.7 413.7 72.5 413.6 85.5 413.2 76.8 413.3ZM81.3 413.5 90.2 413.4 102.9 413.0 94.2 413.1ZM99.2 413.3 108.2 413.2 120.6 412.7 111.7 412.8ZM117.3 413.0 126.5 412.9 138.6 412.5 129.6 412.6ZM135.7 412.8 145.0 412.7 156.8 412.3 147.7 412.4ZM154.4 412.6 163.9 412.4 175.3 412.0 166.0 412.1ZM173.4 412.3 182.9 412.2 194.0 411.8 184.6 411.9ZM192.6 412.1 202.3 412.0 213.1 411.5 203.5 411.7ZM212.1 411.8 222.0 411.7 232.4 411.3 222.7 411.4ZM232.0 411.6 242.0 411.4 252.0 411.0 242.1 411.2ZM252.1 411.3 262.3 411.2 271.9 410.8 261.9 410.9ZM272.5 411.1 282.9 410.9 292.1 410.5 281.9 410.7ZM293.3 410.8 303.8 410.7 312.6 410.3 302.3 410.4ZM314.4 410.5 325.0 410.4 333.4 410.0 323.0 410.1ZM335.8 410.2 346.6 410.1 354.6 409.7 343.9 409.9ZM357.6 410.0 368.6 409.8 376.0 409.4 365.3 409.6ZM379.7 409.7 390.9 409.5 397.9 409.2 386.9 409.3ZM402.2 409.4 413.6 409.3 420.0 408.9 408.9 409.0ZM425.0 409.1 436.6 409.0 442.6 408.6 431.3 408.7ZM448.2 408.8 460.0 408.7 465.5 408.3 454.0 408.4ZM471.9 408.5 483.8 408.4 488.7 408.0 477.1 408.1ZM495.9 408.2 508.0 408.0 512.4 407.7 500.5 407.8ZM520.3 407.9 532.7 407.7 536.4 407.4 524.4 407.5ZM545.1 407.6 557.7 407.4 560.9 407.1 548.6 407.2ZM570.4 407.3 583.2 407.1 585.7 406.7 573.2 406.9ZM596.1 406.9 609.1 406.8 611.0 406.4 598.3 406.6ZM622.3 406.6 635.5 406.4 636.7 406.1 623.8 406.2ZM648.9 406.3 662.4 406.1 662.9 405.7 649.8 405.9ZM676.0 405.9 689.7 405.7 689.5 405.4 676.1 405.6ZM703.6 405.6 717.5 405.4 716.6 405.1 703.0 405.2ZM-14.3 414.5 -6.3 414.4 7.5 413.9 -0.4 414.0ZM1.7 414.3 9.9 414.2 23.4 413.7 15.4 413.8ZM18.0 414.0 26.3 413.9 39.6 413.5 31.5 413.6ZM34.5 413.8 42.9 413.7 56.0 413.3 47.8 413.4ZM51.3 413.6 59.7 413.5 72.6 413.1 64.2 413.2ZM68.3 413.4 76.8 413.3 89.4 412.9 81.0 413.0ZM85.5 413.2 94.2 413.1 106.4 412.7 97.9 412.8ZM102.9 413.0 111.7 412.8 123.7 412.4 115.1 412.5ZM120.6 412.7 129.6 412.6 141.3 412.2 132.5 412.3ZM138.6 412.5 147.7 412.4 159.1 412.0 150.1 412.1ZM156.8 412.3 166.0 412.1 177.1 411.7 168.0 411.9ZM175.3 412.0 184.6 411.9 195.4 411.5 186.2 411.6ZM194.0 411.8 203.5 411.7 213.9 411.3 204.6 411.4ZM213.1 411.5 222.7 411.4 232.8 411.0 223.3 411.1ZM232.4 411.3 242.1 411.2 251.9 410.8 242.3 410.9ZM252.0 411.0 261.9 410.9 271.3 410.5 261.5 410.6ZM271.9 410.8 281.9 410.7 290.9 410.3 281.1 410.4ZM292.1 410.5 302.3 410.4 310.9 410.0 300.9 410.1ZM312.6 410.3 323.0 410.1 331.1 409.7 321.0 409.9ZM333.4 410.0 343.9 409.9 351.7 409.5 341.4 409.6ZM354.6 409.7 365.3 409.6 372.6 409.2 362.1 409.3ZM376.0 409.4 386.9 409.3 393.8 408.9 383.2 409.1ZM397.9 409.2 408.9 409.0 415.3 408.6 404.5 408.8ZM420.0 408.9 431.3 408.7 437.2 408.4 426.2 408.5ZM442.6 408.6 454.0 408.4 459.4 408.1 448.3 408.2ZM465.5 408.3 477.1 408.1 482.0 407.8 470.7 407.9ZM488.7 408.0 500.5 407.8 504.9 407.5 493.4 407.6ZM512.4 407.7 524.4 407.5 528.2 407.2 516.5 407.3ZM-8.2 414.1 -0.4 414.0 13.0 413.6 5.3 413.7ZM7.5 413.9 15.4 413.8 28.6 413.4 20.8 413.5ZM23.4 413.7 31.5 413.6 44.4 413.2 36.5 413.3ZM39.6 413.5 47.8 413.4 60.4 413.0 52.4 413.1ZM56.0 413.3 64.2 413.2 76.7 412.8 68.5 412.9ZM72.6 413.1 81.0 413.0 93.1 412.6 84.9 412.7ZM89.4 412.9 97.9 412.8 109.8 412.4 101.4 412.5ZM106.4 412.7 115.1 412.5 126.7 412.1 118.2 412.3ZM123.7 412.4 132.5 412.3 143.8 411.9 135.3 412.0ZM141.3 412.2 150.1 412.1 161.2 411.7 152.5 411.8ZM159.1 412.0 168.0 411.9 178.8 411.5 170.0 411.6ZM177.1 411.7 186.2 411.6 196.7 411.2 187.7 411.4ZM195.4 411.5 204.6 411.4 214.8 411.0 205.7 411.1ZM213.9 411.3 223.3 411.1 233.2 410.8 223.9 410.9ZM232.8 411.0 242.3 410.9 251.8 410.5 242.4 410.6ZM251.9 410.8 261.5 410.6 270.7 410.3 261.2 410.4ZM271.3 410.5 281.1 410.4 289.8 410.0 280.2 410.1Z" fill="#b9b8ba"/><path d="M0 407 L1200 387 L1200 653 L0 653 Z" fill="url(#hz)"/></svg>
<svg style="left:0;top:-90px" width="1200" height="653"><g stroke="#1f9a2a" stroke-width="1.3" fill="none" stroke-linecap="round"><path d="M325.3 160 L816.6 107.9 M325.3 160 L497.1 273.1 M816.6 107.9 L744.8 258.5 M497.1 273.1 L744.8 258.5"/><path d="M325.3 160 L320.4 601.4 M497.1 273.1 L498.5 498.3 M744.8 258.5 L753.1 502.7 M816.6 107.9 L838.1 630.6"/></g></svg>
<svg style="left:0;top:-90px" width="1200" height="200"><rect x="15" y="105" width="24" height="23" fill="#4a4a4a"/><path d="M21 113 H33 L30 117 H24 Z M24 117 H30 L28.5 120 H25.5 Z M25.5 120 H28.5 V123 H25.5 Z" fill="#dcdcdc"/><rect x="45" y="106" width="72" height="22" fill="#555555"/><rect x="122.5" y="104.5" width="88" height="24" fill="#4a4a4a" stroke="#0c0c0c" stroke-width="1"/><rect x="191" y="105" width="19" height="23" rx="1" fill="#e2e2e2"/><path d="M195 113 H206 L200.5 121 Z" fill="#2e2e2e"/><rect x="215.5" y="104.5" width="88" height="24" fill="#4a4a4a" stroke="#0c0c0c" stroke-width="1"/><rect x="284" y="105" width="19" height="23" rx="1" fill="#e2e2e2"/><path d="M288 113 H299 L293.5 121 Z" fill="#2e2e2e"/><rect x="782.5" y="106.5" width="28" height="27" fill="#2f66a6" stroke="#3a8fd8"/><path d="M796.5 108.5 L792.3 114.0 L800.7 114.0 Z" fill="#f4f4f4"/><path d="M796.5 131.5 L800.7 126.0 L792.3 126.0 Z" fill="#f4f4f4"/><path d="M785.0 120.0 L790.5 124.2 L790.5 115.8 Z" fill="#f4f4f4"/><path d="M808.0 120.0 L802.5 115.8 L802.5 124.2 Z" fill="#f4f4f4"/><rect x="795.0" y="113.5" width="3.0" height="13.0" fill="#f4f4f4"/><rect x="790.0" y="118.5" width="13.0" height="3.0" fill="#f4f4f4"/><rect x="795.3" y="118.8" width="2.4" height="2.4" fill="#2f66a6"/><path d="M822 121 C819 116 826 112 833 113 M840 118 C843 123 836 127 829 127" stroke="#f0f0f0" stroke-width="2.2" fill="none"/><path d="M831 110 L835.5 113 L831 116.5 Z M831 124 L826.5 127 L831 130 Z" fill="#f0f0f0"/><rect x="854.5" y="110.5" width="19" height="19" rx="1.5" fill="none" stroke="#f0f0f0" stroke-width="1.2"/><path d="M854.5 118.5 H863.5 V129.5 H854.5 Z" fill="#f0f0f0"/><path d="M862 122 L870 114 M865.5 113.5 H870.5 V118.5" stroke="#f0f0f0" stroke-width="1.8" fill="none"/><rect x="884.5" y="106.5" width="28" height="27" fill="#263a62" stroke="#1aa6e4"/><path d="M898.5 109.5 L908 115 V126 L898.5 131.5 L889 126 V115 Z" fill="#f2f2f2"/><path d="M898.5 114 V121 M898.5 121 L893 125 M898.5 121 L904 125" stroke="#263a62" stroke-width="1.3"/><path d="M896.5 115.5 L898.5 112.5 L900.5 115.5 Z" fill="#263a62"/><rect x="927" y="128" width="20" height="1.5" fill="#eaeaea"/><rect x="974" y="128" width="20" height="1.5" fill="#eaeaea"/><rect x="1022" y="128" width="20" height="1.5" fill="#eaeaea"/><path d="M936.5 108.9 L933.4 113.0 L939.6 113.0 Z" fill="#eaeaea"/><path d="M936.5 126.1 L939.6 122.0 L933.4 122.0 Z" fill="#eaeaea"/><path d="M927.9 117.5 L932.0 120.7 L932.0 114.3 Z" fill="#eaeaea"/><path d="M945.1 117.5 L941.0 114.3 L941.0 120.7 Z" fill="#eaeaea"/><rect x="935.4" y="112.6" width="2.2" height="9.8" fill="#eaeaea"/><rect x="931.6" y="116.4" width="9.8" height="2.2" fill="#eaeaea"/><rect x="935.6" y="116.6" width="1.8" height="1.8" fill="#2f2f2f"/><path d="M978 119 C976 115 981 112.5 986 113 M992 116 C994 120 989 122.5 984 122" stroke="#eaeaea" stroke-width="1.6" fill="none"/><path d="M985 110.5 L988.5 113 L985 115.5 Z M985 119.5 L981.5 122 L985 124.5 Z" fill="#eaeaea"/><rect x="1023" y="117" width="8" height="8" rx="1" fill="#eaeaea"/><path d="M1029 119 L1038 111.5 M1034 111 H1039 V116" stroke="#eaeaea" stroke-width="1.8" fill="none"/><rect x="1065" y="112" width="134" height="1" fill="#1c1c1c"/><rect x="1065" y="113" width="134" height="1" fill="#4a4a4a"/><path d="M1129 109 L1132 107 L1133 109 V117 H1129 Z" fill="#8a8a8a"/><rect x="1066" y="122" width="132" height="23" fill="#535353"/></svg>
<div class="t" style="left:951px;top:18.5px;">0</div>
<div class="t" style="left:999px;top:18.5px;">0</div>
<div class="t" style="left:1047px;top:18.5px;">0</div>
<div class="t" style="left:46px;top:17.5px;">Perspective</div>
<div class="t" style="left:126px;top:18.5px;">Lit</div>
<div class="t" style="left:219px;top:18.5px;">Default</div>
<div class="t" style="left:1078px;top:34.5px;">Camera Speed:5.0</div>
<svg style="left:0;top:-90px" width="1200" height="653"><defs><linearGradient id="bodyg" x1="0" x2="1" y1="0" y2="0"><stop offset="0" stop-color="#b3aea9"/><stop offset="0.3" stop-color="#ddd7d1"/><stop offset="0.65" stop-color="#e4dfd9"/><stop offset="1" stop-color="#b0aba6"/></linearGradient></defs><path d="M580 484 C568 484 559 490 558 497 C558 503 563 506 567 502 C569 499 572 497 575 499 C574 506 580 514 592 514 L594 486 Z" fill="#58585a"/><rect x="599" y="489" width="47" height="60" fill="#8c8c8c" opacity="0.22"/><path d="M566.5 385 L593 398 C593 410 591 425 591 433 C592 445 593 452 593 459 C595 470 595 480 594.7 489 C594 496 592 502 592 507 L581.5 507 C580 498 580 490 579 486 C574 475 570 460 570 447 C568 435 567 424 568 415 C566 405 566 395 566.5 385 Z" fill="url(#bodyg)"/><path d="M581 505 L592 505 C593 512 594 522 593 530 C591 534 586 537 575 537 C568 537 566 535 566.5 531 C567 524 574 516 581 505 Z" fill="#d8d2cc" stroke="#8f8a85" stroke-width="0.9"/><path d="M569 528 C575 526 586 526 592 527" stroke="#a8a29c" stroke-width="0.8" fill="none"/><path d="M580 503 H593 V507 H580 Z" fill="#4c4a48"/><path d="M598 394 L621 385 C622 398 622 412 622 424 C623 440 623 452 623 463 C622 472 622 480 622 486 C621 496 621 505 621 512 L606 514 C606 505 606 496 606 489 C603 478 601 468 601 459 C601 450 601 440 601 433 C600 420 598 408 598 394 Z" fill="url(#bodyg)"/><path d="M605 514 L622 513 C623 522 624 532 624 542 C622 548 616 549 611 549 C606 549 604 546 604 540 C604 530 604 522 605 514 Z" fill="#dcd6d0" stroke="#9a958f" stroke-width="0.9"/><path d="M605 510 H622 V514 H605 Z" fill="#55524f"/><path d="M570 424 L579 424 L581 437 L580.5 463 L574 460 L570 447 Z" fill="#d2ccc6" stroke="#4a4846" stroke-width="1"/><path d="M603 422 L613 422 L616 437 L612 463 L606 460 L602 447 Z" fill="#d2ccc6" stroke="#4a4846" stroke-width="1"/><path d="M569 366 L618 366 C619 375 621 380 621 386 C614 392 606 396 598 399 L593 399 C585 395 575 390 567 386 C567 380 568 372 569 366 Z" fill="url(#bodyg)"/><path d="M568 379 L582 396 L593 402 L586 393 L572 380 Z M620 380 L606 394 L598 400 L610 395 L621 386 Z" fill="#4a4a4a"/><path d="M563 300 C570 295 577 293 586 294 C595 293 604 293 618 298 C626 302 631 308 630 318 C626 330 620 340 616 350 C613 356 612 362 612 368 L574 368 C574 362 572 355 569 348 C565 338 558 328 556 318 C555 308 558 303 563 300 Z" fill="url(#bodyg)"/><path d="M578 312 L585 316 L593 312 M585 307 V316 M569 326 C577 332 594 332 603 325 M574 337 C580 340 592 340 598 337 M576 348 H596 M586 332 V362" stroke="#9d9893" stroke-width="0.8" fill="none" opacity="0.8"/><path d="M563 300 C566 315 570 332 574 350 L569 348 C565 338 558 328 556 318 C555 308 558 303 563 300 Z M618 298 C614 315 611 332 608 350 L616 350 C620 340 626 330 630 318 C631 308 626 302 618 298 Z" fill="#a8a39e" opacity="0.3"/><path d="M561 299 C555 302 553 310 553.5 322 L567 324 C568 314 567 304 561 299 Z" fill="url(#bodyg)"/><path d="M618 298 C627 301 632 310 632 322 L618 324 C617 314 616 304 618 298 Z" fill="url(#bodyg)"/><path d="M556.7 313.7 L563 312 L563 321.6 L556.7 321.6 Z M615.5 306 L624 312 L622 318 L616 316 Z" fill="#3c3c3c"/><path d="M553.5 321.6 L566 323 L566 347 L555 348 Z" fill="url(#bodyg)"/><path d="M617.8 323 L632 321.6 L632 345 L619.4 345 Z" fill="url(#bodyg)"/><path d="M554 345 L567 345 L568 354.5 L553 354.5 Z M619 342 L633 342 L634 353 L619 353 Z" fill="#4a4a4a"/><path d="M552 352 L567.6 352 L567 385 C566 394 564 400 560 403 C555 403 551 399 550.6 393 L550 370 Z" fill="url(#bodyg)"/><path d="M619.4 351 L636 351 L638 370 L638.8 393 C638 399 634 402 630 402 C626 400 624 396 622 390 Z" fill="url(#bodyg)"/><path d="M551 394 C553 401 558 404 563 402 L562 398 C558 400 554 398 552 393 Z M625 396 C628 401 633 402 638 398 L638.5 394 C635 398 630 399 626 394 Z" fill="#555"/><path d="M579 286 L597 286 L598 297 C594 300 583 300 578 297 Z" fill="#6a6662"/><path d="M584.9 249.7 C594 249.7 600.5 256 600.3 266.7 C600 274 598 281 596 284 C593 288 590 291 586.5 291.8 C582 290 579 288 577 285.5 C573 280 570 273 570 266.7 C570 256 576 249.7 584.9 249.7 Z" fill="#d9d3cd"/><path d="M576 256.5 C582 255 589 256 592.7 258.8 C594 265 593 272 592 276 C589 281 585 284 581.8 284.7 C578 279 573 270 572.4 262 C572.4 259 573.5 257 576 256.5 Z" fill="#d4d9e0"/><path d="M597.3 382.6 L585 441.8 L607 442.6 Z" fill="#34b044" opacity="0.72"/><path d="M597.3 382.6 L592 441.8 L601 442 Z" fill="#50d060" opacity="0.5"/><path d="M591 489 L599 487 L599 546 L591 546 Z" fill="#2fb5b5" opacity="0.55"/><path d="M599 382 V546" stroke="#3ab04a" stroke-width="0.6" opacity="0.6"/><path d="M599 536 L646 537 L643 551 L593 549 Z" fill="#b05ac8" opacity="0.6"/><path d="M456.2 531.3 L510.2 518.2 L514.6 535.7 L508.8 544.5 Z" fill="#c0605c" opacity="0.65"/><path d="M456 531.3 L597 537" stroke="#c04040" stroke-width="0.8" opacity="0.8"/><path d="M562.8 567.8 L590.5 557.6 L592 581 L564.2 598.5 Z" fill="#4646b8" opacity="0.85"/><path d="M564.2 598.5 L597.8 537.2" stroke="#3030a8" stroke-width="0.9"/></svg>
</div>
<div class="a" style="left:0px;top:653px;width:1200px;height:28px;background:#404040;"></div>
<div class="a" style="left:0px;top:653px;width:70px;height:28px;background:#505050;"></div>
<div class="t" style="left:4px;top:660.5px;">Project</div>
<div class="a" style="left:1184px;top:662px;width:14px;height:14px;background:#5a5a5a;"></div>
<svg style="left:1184px;top:662px" width="14" height="14"><g fill="#ffffff"><rect x="4.8" y="1.9" width="1.4" height="10"/><rect x="4.8" y="2.7" width="7.2" height="1.4"/><rect x="4.8" y="8.9" width="7.2" height="1.4"/><rect x="10.7" y="2.7" width="1.4" height="7.6"/><rect x="2" y="6" width="3" height="1.3"/></g></svg>
<div class="a" style="left:0px;top:681px;width:1200px;height:30px;background:#262626;"></div>
<svg style="left:0;top:0" width="1200" height="1020"><path d="M292 696.5 H283 M287 692 L282.5 696.5 L287 701" stroke="#d0d0d0" stroke-width="1.6" fill="none"/><path d="M304 696.5 H313 M309 692 L313.5 696.5 L309 701" stroke="#d0d0d0" stroke-width="1.6" fill="none"/><rect x="321" y="689" width="2" height="16" fill="#d0d0d0"/><path d="M367 692 L372.5 696.5 L367 701 Z M477 692 L482.5 696.5 L477 701 Z M551 692 L556.5 696.5 L551 701 Z" fill="#bdbdbd"/></svg>
<div class="t" style="left:333px;top:688.5px;color:#d4dcec;">res</div>
<div class="t" style="left:380px;top:688.5px;color:#d4dcec;">Characters</div>
<div class="t" style="left:490px;top:688.5px;color:#d4dcec;">Robots</div>
<div class="t" style="left:564px;top:688.5px;color:#d4dcec;">Meshes</div>
<div class="t" style="left:1050px;top:687.5px;color:#e8e8e8;">Scan complete!</div>
<svg style="left:1165px;top:689px" width="18" height="18" viewBox="0 0 18 18"><g fill="#f2f2f2"><circle cx="9" cy="9" r="5.2"/><rect x="7.6" y="1.8" width="2.8" height="4" transform="rotate(0 9 9)"/><rect x="7.6" y="1.8" width="2.8" height="4" transform="rotate(45 9 9)"/><rect x="7.6" y="1.8" width="2.8" height="4" transform="rotate(90 9 9)"/><rect x="7.6" y="1.8" width="2.8" height="4" transform="rotate(135 9 9)"/><rect x="7.6" y="1.8" width="2.8" height="4" transform="rotate(180 9 9)"/><rect x="7.6" y="1.8" width="2.8" height="4" transform="rotate(225 9 9)"/><rect x="7.6" y="1.8" width="2.8" height="4" transform="rotate(270 9 9)"/><rect x="7.6" y="1.8" width="2.8" height="4" transform="rotate(315 9 9)"/></g><circle cx="9" cy="9" r="2" fill="#262626"/></svg>
<div class="a" style="left:0px;top:711px;width:1200px;height:284px;background:#3c3c3c;"></div>
<div class="a" style="left:3px;top:720px;width:311px;height:21px;background:#333333;border:1px solid #272727;"></div>
<div class="a" style="left:296px;top:721px;width:17px;height:19px;background:#4a4a4a;border:1px solid #5a5a5a;"></div>
<svg style="left:296px;top:721px" width="17" height="19"><circle cx="9.5" cy="8" r="4.2" stroke="#e6e6e6" stroke-width="1.6" fill="none"/><path d="M6.5 11 L3.5 14.5" stroke="#e6e6e6" stroke-width="2"/></svg>
<div class="a" style="left:3px;top:749px;width:311px;height:236px;background:#393939;border:1px solid #262626;"></div>
<div class="a" style="left:297px;top:750px;width:16px;height:234px;background:#444444;"></div>
<div class="a" style="left:298px;top:764px;width:14px;height:62px;background:#5c5c5c;"></div>
<svg style="left:297px;top:750px" width="16" height="234"><path d="M4 11 L8 7 L12 11" stroke="#8c8c8c" stroke-width="1.2" fill="none"/><path d="M4 226 L8 230 L12 226" stroke="#8c8c8c" stroke-width="1.2" fill="none"/></svg>
<div class="a" style="left:4px;top:894px;width:292px;height:16px;background:#475a8a;"></div>
<svg style="left:0;top:0" width="320" height="1000"><path d="M8 755 H18 L13 760 Z" fill="#a8a8a8"/><path d="M23.5 754.5 L24.5 753 H27.5 L28.5 754.5 H33.5 V756.5 H23.5 Z" fill="#8a8a8a" stroke="#222" stroke-width="0.6"/><path d="M24.5 756.5 H36.0 L34.5 762.5 H23.5 Z" fill="#c8c8c8" stroke="#222" stroke-width="0.6"/><path d="M26 771 H36 L31 776 Z" fill="#a8a8a8"/><path d="M41.5 770.5 L42.5 769 H45.5 L46.5 770.5 H51.5 V772.5 H41.5 Z" fill="#8a8a8a" stroke="#222" stroke-width="0.6"/><path d="M42.5 772.5 H54.0 L52.5 778.5 H41.5 Z" fill="#c8c8c8" stroke="#222" stroke-width="0.6"/><path d="M59.5 786 L60.5 785 H63.5 L64.5 786.5 H70.5 V794.5 H59.5 Z" fill="#c8c8c8" stroke="#222" stroke-width="0.6"/><path d="M43 803 H53 L48 808 Z" fill="#a8a8a8"/><path d="M59.5 802.5 L60.5 801 H63.5 L64.5 802.5 H69.5 V804.5 H59.5 Z" fill="#8a8a8a" stroke="#222" stroke-width="0.6"/><path d="M60.5 804.5 H72.0 L70.5 810.5 H59.5 Z" fill="#c8c8c8" stroke="#222" stroke-width="0.6"/><path d="M65.5 817 L70.5 822 L65.5 827 Z" fill="#a8a8a8"/><path d="M77.5 818 L78.5 817 H81.5 L82.5 818.5 H88.5 V826.5 H77.5 Z" fill="#c8c8c8" stroke="#222" stroke-width="0.6"/><path d="M65.5 833 L70.5 838 L65.5 843 Z" fill="#a8a8a8"/><path d="M77.5 834 L78.5 833 H81.5 L82.5 834.5 H88.5 V842.5 H77.5 Z" fill="#c8c8c8" stroke="#222" stroke-width="0.6"/><path d="M65.5 849 L70.5 854 L65.5 859 Z" fill="#a8a8a8"/><path d="M77.5 850 L78.5 849 H81.5 L82.5 850.5 H88.5 V858.5 H77.5 Z" fill="#c8c8c8" stroke="#222" stroke-width="0.6"/><path d="M61 867 H71 L66 872 Z" fill="#a8a8a8"/><path d="M77.5 866.5 L78.5 865 H81.5 L82.5 866.5 H87.5 V868.5 H77.5 Z" fill="#8a8a8a" stroke="#222" stroke-width="0.6"/><path d="M78.5 868.5 H90.0 L88.5 874.5 H77.5 Z" fill="#c8c8c8" stroke="#222" stroke-width="0.6"/><path d="M95.5 882 L96.5 881 H99.5 L100.5 882.5 H106.5 V890.5 H95.5 Z" fill="#c8c8c8" stroke="#222" stroke-width="0.6"/><path d="M95.5 898.5 L96.5 897 H99.5 L100.5 898.5 H105.5 V900.5 H95.5 Z" fill="#8a8a8a" stroke="#222" stroke-width="0.6"/><path d="M96.5 900.5 H108.0 L106.5 906.5 H95.5 Z" fill="#c8c8c8" stroke="#222" stroke-width="0.6"/><path d="M95.5 914 L96.5 913 H99.5 L100.5 914.5 H106.5 V922.5 H95.5 Z" fill="#c8c8c8" stroke="#222" stroke-width="0.6"/><path d="M59.5 930 L60.5 929 H63.5 L64.5 930.5 H70.5 V938.5 H59.5 Z" fill="#c8c8c8" stroke="#222" stroke-width="0.6"/><path d="M47.5 945 L52.5 950 L47.5 955 Z" fill="#a8a8a8"/><path d="M59.5 946 L60.5 945 H63.5 L64.5 946.5 H70.5 V954.5 H59.5 Z" fill="#c8c8c8" stroke="#222" stroke-width="0.6"/><path d="M59.5 962 L60.5 961 H63.5 L64.5 962.5 H70.5 V970.5 H59.5 Z" fill="#c8c8c8" stroke="#222" stroke-width="0.6"/><path d="M47.5 977 L52.5 982 L47.5 987 Z" fill="#a8a8a8"/><path d="M59.5 978 L60.5 977 H63.5 L64.5 978.5 H70.5 V986.5 H59.5 Z" fill="#c8c8c8" stroke="#222" stroke-width="0.6"/></svg>
<div class="t" style="left:40px;top:748.5px;color:#f0f0f0;">Project</div>
<div class="t" style="left:58px;top:764.5px;color:#f0f0f0;">res</div>
<div class="t" style="left:76px;top:780.5px;color:#f0f0f0;">BlueBall</div>
<div class="t" style="left:76px;top:796.5px;color:#f0f0f0;">Characters</div>
<div class="t" style="left:94px;top:812.5px;color:#f0f0f0;">Avatar</div>
<div class="t" style="left:94px;top:828.5px;color:#f0f0f0;">Creature</div>
<div class="t" style="left:94px;top:844.5px;color:#f0f0f0;">Npc</div>
<div class="t" style="left:94px;top:860.5px;color:#f0f0f0;">Robots</div>
<div class="t" style="left:112px;top:876.5px;color:#f0f0f0;">Animations</div>
<div class="t" style="left:112px;top:892.5px;color:#f0f0f0;">Meshes</div>
<div class="t" style="left:112px;top:908.5px;color:#f0f0f0;">Textures</div>
<div class="t" style="left:76px;top:924.5px;color:#f0f0f0;">combination</div>
<div class="t" style="left:76px;top:940.5px;color:#f0f0f0;">content</div>
<div class="t" style="left:76px;top:956.5px;color:#f0f0f0;">cur</div>
<div class="t" style="left:76px;top:972.5px;color:#f0f0f0;">default</div>
<div class="a" style="left:3px;top:984px;width:311px;height:1px;background:#262626;"></div>
<div class="a" style="left:319px;top:711px;width:5px;height:284px;background:#505050;"></div>
<div class="a" style="left:333px;top:719px;width:22px;height:22px;background:#383838;border:1px solid #585858;"></div>
<svg style="left:333px;top:719px" width="22" height="22"><path d="M6.5 9 H15.5 L11 14.5 Z" fill="#e8e8e8"/></svg>
<div class="a" style="left:362px;top:720px;width:161px;height:21px;background:#333333;border:1px solid #272727;"></div>
<div class="a" style="left:505px;top:721px;width:17px;height:19px;background:#4a4a4a;border:1px solid #5a5a5a;"></div>
<svg style="left:505px;top:721px" width="17" height="19"><circle cx="9.5" cy="8" r="4.2" stroke="#e6e6e6" stroke-width="1.6" fill="none"/><path d="M6.5 11 L3.5 14.5" stroke="#e6e6e6" stroke-width="2"/></svg>
<div class="a" style="left:799px;top:744px;width:90px;height:139px;border:3px solid #f39436;"></div>
<div class="a" style="left:808px;top:751px;width:72px;height:120px;background:#5b7fb2;border:1px solid #4aa6e6;"></div>
<svg style="left:0;top:0" width="1200" height="1020"><defs><radialGradient id="sph" cx="0.38" cy="0.35" r="0.7"><stop offset="0" stop-color="#ffffff"/><stop offset="0.6" stop-color="#f0f0f0"/><stop offset="1" stop-color="#a8a8a8"/></radialGradient><linearGradient id="docg" x1="0" x2="1" y1="0" y2="1"><stop offset="0" stop-color="#e6e6e6"/><stop offset="1" stop-color="#a4a4a4"/></linearGradient></defs><rect x="333" y="815" width="60" height="4" fill="#e6e662"/><ellipse cx="363" cy="780.2" rx="1.8" ry="2.2" fill="#ebe6df"/><path d="M358.8 783.1 L367.2 783.1 L366.0 793.0 L360.0 793.0 Z" fill="#ebe6df"/><path d="M358.8 783.7 L357.9 789.1 L357.0 794.8 M367.2 783.7 L368.1 789.1 L369.0 794.8" stroke="#ebe6df" stroke-width="1.6" stroke-linecap="round" stroke-linejoin="round" fill="none"/><path d="M361.2 793.0 L360.8 800.5 L360.3 807.1 M364.8 793.0 L365.2 800.5 L365.7 807.1" stroke="#ebe6df" stroke-width="2.2" stroke-linecap="round" stroke-linejoin="round" fill="none"/><rect x="413" y="815" width="60" height="4" fill="#3ab43a"/><circle cx="443" cy="791.5" r="19" fill="url(#sph)"/><path d="M435 782 L441 786 L446 784 M445 792 L449 796 L447 801" stroke="#8a8070" stroke-width="0.8" fill="none"/><rect x="493" y="815" width="60" height="4" fill="#1fd2be"/><ellipse cx="523" cy="759.1" rx="3.3" ry="4.1" fill="#ebe6df"/><path d="M515.3 764.4 L530.7 764.4 L528.5 782.5 L517.5 782.5 Z" fill="#ebe6df"/><path d="M515.3 765.5 L510.4 775.4 L508.1 785.8 M530.7 765.5 L535.6 775.4 L537.9 785.8" stroke="#ebe6df" stroke-width="3.0" stroke-linecap="round" stroke-linejoin="round" fill="none"/><path d="M519.7 782.5 L518.9 796.2 L518.0 808.4 M526.3 782.5 L527.1 796.2 L528.0 808.4" stroke="#ebe6df" stroke-width="4.1" stroke-linecap="round" stroke-linejoin="round" fill="none"/><rect x="573" y="815" width="60" height="4" fill="#4a4a8e"/><path d="M584 759 H613 L624 770 V810 H584 Z" fill="url(#docg)" stroke="#9a9a9a" stroke-width="0.8"/><path d="M613 759 V770 H624" fill="#d0d0d0" stroke="#9a9a9a" stroke-width="0.8"/><rect x="589" y="784" width="28" height="1.6" fill="#555"/><rect x="589" y="791" width="28" height="1.6" fill="#555"/><rect x="589" y="798" width="28" height="1.6" fill="#555"/><rect x="589" y="805" width="28" height="1.6" fill="#555"/><path d="M594 775 C594 764 614 763 614 775 C614 783 605 783 605 791" stroke="#c41a22" stroke-width="5.5" fill="none"/><circle cx="605" cy="800" r="3.4" fill="#c41a22"/><rect x="653" y="815" width="60" height="4" fill="#3ab43a"/><circle cx="683" cy="791.5" r="19" fill="url(#sph)"/><rect x="733" y="815" width="60" height="4" fill="#e6e662"/><ellipse cx="763" cy="780.2" rx="1.8" ry="2.2" fill="#ebe6df"/><path d="M758.8 783.1 L767.2 783.1 L766.0 793.0 L760.0 793.0 Z" fill="#ebe6df"/><path d="M758.8 783.7 L757.9 789.1 L757.0 794.8 M767.2 783.7 L768.1 789.1 L769.0 794.8" stroke="#ebe6df" stroke-width="1.6" stroke-linecap="round" stroke-linejoin="round" fill="none"/><path d="M761.2 793.0 L760.8 800.5 L760.3 807.1 M764.8 793.0 L765.2 800.5 L765.7 807.1" stroke="#ebe6df" stroke-width="2.2" stroke-linecap="round" stroke-linejoin="round" fill="none"/><path d="M759.4 796.0 L761.5 796.6 M764.5 805.0 L766.6 805.6 M760.0 803.5 L761.8 806.5" stroke="#2a50e0" stroke-width="1" fill="none"/><path d="M758.5 788.5 L760.0 791.5 M766.0 796.6 L767.5 799.0" stroke="#20c040" stroke-width="1" fill="none"/><rect x="813" y="815" width="60" height="4" fill="#e6e662"/><ellipse cx="843" cy="780.2" rx="1.8" ry="2.2" fill="#ebe6df"/><path d="M838.8 783.1 L847.2 783.1 L846.0 793.0 L840.0 793.0 Z" fill="#ebe6df"/><path d="M838.8 783.7 L837.9 789.1 L837.0 794.8 M847.2 783.7 L848.1 789.1 L849.0 794.8" stroke="#ebe6df" stroke-width="1.6" stroke-linecap="round" stroke-linejoin="round" fill="none"/><path d="M841.2 793.0 L840.8 800.5 L840.3 807.1 M844.8 793.0 L845.2 800.5 L845.7 807.1" stroke="#ebe6df" stroke-width="2.2" stroke-linecap="round" stroke-linejoin="round" fill="none"/><rect x="893" y="815" width="60" height="4" fill="#3ab43a"/><circle cx="923" cy="791.5" r="19" fill="url(#sph)"/><rect x="973" y="815" width="60" height="4" fill="#e020e0"/><rect x="973.5" y="755.5" width="59" height="59" fill="#1b2e1e" stroke="#4a86a8"/><rect x="975" y="808" width="56" height="6" fill="#3a6a3e"/><circle cx="1006" cy="767" r="4.5" fill="#fff"/><path d="M1004 773 L999 789 L1011 797 L1009 806 M999 789 L991 798 L985 795 M1004 775 L993 780 L989 786 M1004 775 L1011 783 L1018 781" stroke="#fff" stroke-width="3.2" fill="none" stroke-linecap="round" stroke-linejoin="round"/><rect x="1053" y="815" width="60" height="4" fill="#1e8a30"/><path d="M1064 759 H1093 L1104 770 V810 H1064 Z" fill="url(#docg)" stroke="#9a9a9a" stroke-width="0.8"/><path d="M1093 759 V770 H1104" fill="#d0d0d0" stroke="#9a9a9a" stroke-width="0.8"/><rect x="1069" y="784" width="28" height="1.6" fill="#555"/><rect x="1069" y="791" width="28" height="1.6" fill="#555"/><rect x="1069" y="798" width="28" height="1.6" fill="#555"/><rect x="1069" y="805" width="28" height="1.6" fill="#555"/><path d="M1074 775 C1074 764 1094 763 1094 775 C1094 783 1085 783 1085 791" stroke="#c41a22" stroke-width="5.5" fill="none"/><circle cx="1085" cy="800" r="3.4" fill="#c41a22"/></svg>
<div class="t" style="left:323px;width:80px;text-align:center;top:822.5px;color:#f2f2f2">SK_Huma</div>
<div class="t" style="left:323px;width:80px;text-align:center;top:837.5px;color:#f2f2f2">n.actor</div>
<div class="t" style="left:403px;width:80px;text-align:center;top:822.5px;color:#f2f2f2">SK_Huma</div>
<div class="t" style="left:403px;width:80px;text-align:center;top:837.5px;color:#f2f2f2">n.mtl</div>
<div class="t" style="left:483px;width:80px;text-align:center;top:822.5px;color:#f2f2f2">SK_Huma</div>
<div class="t" style="left:483px;width:80px;text-align:center;top:837.5px;color:#f2f2f2">n.xmod</div>
<div class="t" style="left:563px;width:80px;text-align:center;top:822.5px;color:#f2f2f2">SK_Huma</div>
<div class="t" style="left:563px;width:80px;text-align:center;top:837.5px;color:#f2f2f2">n.xmodpa</div>
<div class="t" style="left:563px;width:80px;text-align:center;top:852.5px;color:#f2f2f2">rams</div>
<div class="t" style="left:643px;width:80px;text-align:center;top:822.5px;color:#f2f2f2">SK_Huma</div>
<div class="t" style="left:643px;width:80px;text-align:center;top:837.5px;color:#f2f2f2">n_Blue.mt</div>
<div class="t" style="left:643px;width:80px;text-align:center;top:852.5px;color:#f2f2f2">l</div>
<div class="t" style="left:723px;width:80px;text-align:center;top:822.5px;color:#f2f2f2">SK_Huma</div>
<div class="t" style="left:723px;width:80px;text-align:center;top:837.5px;color:#f2f2f2">n_FBIK.ac</div>
<div class="t" style="left:723px;width:80px;text-align:center;top:852.5px;color:#f2f2f2">tor</div>
<div class="t" style="left:803px;width:80px;text-align:center;top:822.5px;color:#f2f2f2">SK_Huma</div>
<div class="t" style="left:803px;width:80px;text-align:center;top:837.5px;color:#f2f2f2">n_new.act</div>
<div class="t" style="left:803px;width:80px;text-align:center;top:852.5px;color:#f2f2f2">or</div>
<div class="t" style="left:883px;width:80px;text-align:center;top:822.5px;color:#f2f2f2">SK_Huma</div>
<div class="t" style="left:883px;width:80px;text-align:center;top:837.5px;color:#f2f2f2">n_Orange.</div>
<div class="t" style="left:883px;width:80px;text-align:center;top:852.5px;color:#f2f2f2">mtl</div>
<div class="t" style="left:963px;width:80px;text-align:center;top:822.5px;color:#f2f2f2">SK_Huma</div>
<div class="t" style="left:963px;width:80px;text-align:center;top:837.5px;color:#f2f2f2">n_tpose.x</div>
<div class="t" style="left:963px;width:80px;text-align:center;top:852.5px;color:#f2f2f2">skt</div>
<div class="t" style="left:1043px;width:80px;text-align:center;top:822.5px;color:#f2f2f2">sk_human</div>
<div class="t" style="left:1043px;width:80px;text-align:center;top:837.5px;color:#f2f2f2">_tpose.xs</div>
<div class="t" style="left:1043px;width:80px;text-align:center;top:852.5px;color:#f2f2f2">kt_ext</div>
<div class="a" style="left:3px;top:984px;width:311px;height:11px;background:#3c3c3c;border-top:1px solid #262626;"></div>
<div class="a" style="left:1204px;top:90px;width:360px;height:905px;background:#505050;"></div>
<div class="a" style="left:1204px;top:91px;width:359px;height:25px;background:#363636;border-top:1px solid #262626;border-bottom:1px solid #2c2c2c;"></div>
<div class="a" style="left:1205px;top:118px;width:358px;height:20px;background:#555555;border:1px solid #3a3a3a;"></div>
<div class="a" style="left:1219px;top:118px;width:1px;height:20px;background:#3a3a3a;"></div>
<div class="a" style="left:1419px;top:118px;width:2px;height:20px;background:#3a3a3a;"></div>
<div class="a" style="left:1554px;top:118px;width:1px;height:20px;background:#3a3a3a;"></div>
<div class="t" style="left:1220px;width:199px;text-align:center;top:119px">Name</div>
<div class="t" style="left:1424px;width:133px;text-align:center;top:119px">Type</div>
<div class="a" style="left:1205px;top:158px;width:15px;height:180px;background:#4a4a4a;"></div>
<div class="a" style="left:1220px;top:318px;width:199px;height:20px;background:#4f6294;"></div>
<div class="a" style="left:1422px;top:318px;width:142px;height:20px;background:#4f6294;"></div>
<svg style="left:1204px;top:138px" width="360" height="200"><path d="M2 30 C5 25 11 25 14 30 C11 35 5 35 2 30 Z" fill="#b8b8b8"/><circle cx="8" cy="30" r="2.2" fill="#404040"/><path d="M2 50 C5 45 11 45 14 50 C11 55 5 55 2 50 Z" fill="#b8b8b8"/><circle cx="8" cy="50" r="2.2" fill="#404040"/><path d="M2 70 C5 65 11 65 14 70 C11 75 5 75 2 70 Z" fill="#b8b8b8"/><circle cx="8" cy="70" r="2.2" fill="#404040"/><path d="M2 90 C5 85 11 85 14 90 C11 95 5 95 2 90 Z" fill="#b8b8b8"/><circle cx="8" cy="90" r="2.2" fill="#404040"/><path d="M2 110 C5 105 11 105 14 110 C11 115 5 115 2 110 Z" fill="#b8b8b8"/><circle cx="8" cy="110" r="2.2" fill="#404040"/><path d="M2 130 C5 125 11 125 14 130 C11 135 5 135 2 130 Z" fill="#b8b8b8"/><circle cx="8" cy="130" r="2.2" fill="#404040"/><path d="M2 150 C5 145 11 145 14 150 C11 155 5 155 2 150 Z" fill="#b8b8b8"/><circle cx="8" cy="150" r="2.2" fill="#404040"/><path d="M2 170 C5 165 11 165 14 170 C11 175 5 175 2 170 Z" fill="#b8b8b8"/><circle cx="8" cy="170" r="2.2" fill="#404040"/><path d="M2 190 C5 185 11 185 14 190 C11 195 5 195 2 190 Z" fill="#b8b8b8"/><circle cx="8" cy="190" r="2.2" fill="#404040"/><path d="M42.5 40 V188 M42.5 50 H51 M42.5 70 H51 M42.5 90 H51 M42.5 110 H51 M42.5 130 H51 M42.5 150 H51 M42.5 170 H51 M42.5 188 H51" stroke="#1e1e1e" stroke-width="1" fill="none"/><path d="M20.5 25.5 H30.5 V35.5 H20.5 Z M25.5 22 V25.5 M20.5 30.5 H30.5" stroke="#202020" stroke-width="1" fill="none"/><rect x="33.5" y="20.5" width="16" height="16" fill="#3a3a3a" stroke="#2a2a2a"/><path d="M36 30 L43 26 L48 28 L41 32 Z M36 27 L43 23 L48 25 L41 29 Z" fill="#cfcfcf" stroke="#555" stroke-width="0.5"/><path d="M45 30 V36 M42 33 H48" stroke="#2fbf3a" stroke-width="1.8"/><rect x="54.5" y="43.5" width="9" height="11" fill="#e8e8e8" stroke="#3a3a3a"/><rect x="56" y="45" width="3" height="4" fill="#1f6fe0"/><path d="M60.5 45.5 V52.5" stroke="#444"/><g stroke="#f5a01c" stroke-width="1.5" stroke-linecap="round" fill="none"><path d="M58.2 79.7 L58.2 81.7"/><path d="M53.7 81.7 L55.2 83.2"/><path d="M51.7 86.2 L53.7 86.2"/><path d="M62.7 81.7 L61.2 83.2"/><path d="M63.2 85.9 L65.2 87.0"/><path d="M54.2 90.2 L55.2 89.2"/><path d="M56.4 91.7 L56.7 90.4"/><path d="M59.2 91.0 L62.5 94.8"/><path d="M61.7 90.0 L67.0 95.5"/><path d="M63.5 88.0 L67.5 91.5"/></g><circle cx="58.2" cy="86.2" r="3.6" fill="#f5a01c"/><circle cx="59.5" cy="125" r="3.3" fill="#2a8ee0"/><path d="M52.5 136 C52.5 130 55 129 59.5 129 C64 129 66.5 130 66.5 136 Z" fill="#2a8ee0"/><circle cx="59.5" cy="145" r="3.3" fill="#2a8ee0"/><path d="M52.5 156 C52.5 150 55 149 59.5 149 C64 149 66.5 150 66.5 156 Z" fill="#2a8ee0"/><circle cx="59.5" cy="165" r="3.3" fill="#2a8ee0"/><path d="M52.5 176 C52.5 170 55 169 59.5 169 C64 169 66.5 170 66.5 176 Z" fill="#2a8ee0"/></svg>
<div class="t" style="left:1222px;top:140.5px;">balloon_control</div>
<div class="t" style="left:1422px;top:140.5px;">Scene</div>
<div class="t" style="left:1256px;top:160.5px;color:#22e024;">PersistentLevel</div>
<div class="t" style="left:1422px;top:160.5px;color:#22e024;">Level</div>
<div class="t" style="left:1272px;top:180.5px;">LSceneSettings-1</div>
<div class="t" style="left:1422px;top:180.5px;">Scene Settings</div>
<div class="t" style="left:1258px;top:200.5px;">LTerrainActor</div>
<div class="t" style="left:1422px;top:200.5px;">Terrain Object</div>
<div class="t" style="left:1274px;top:220.5px;">LDirectLight</div>
<div class="t" style="left:1422px;top:220.5px;">Direct Light</div>
<div class="t" style="left:1258px;top:240.5px;">LChunkManagerActor</div>
<div class="t" style="left:1422px;top:240.5px;">Chunk Manager</div>
<div class="t" style="left:1274px;top:260.5px;">LCharacter</div>
<div class="t" style="left:1422px;top:260.5px;">Character</div>
<div class="t" style="left:1274px;top:280.5px;">LCharacter_2</div>
<div class="t" style="left:1422px;top:280.5px;">Character</div>
<div class="t" style="left:1274px;top:300.5px;">LCharacter_3</div>
<div class="t" style="left:1422px;top:300.5px;">Character</div>
<div class="t" style="left:1258px;top:320.5px;">SK_Human_new</div>
<div class="t" style="left:1422px;top:320.5px;">Skeletal Mesh Object</div>
<div class="a" style="left:1563px;top:90px;width:1px;height:905px;background:#454545;"></div>
<div class="a" style="left:1204px;top:972px;width:360px;height:23px;background:#505050;border:1px solid #101010;"></div>
<div class="t" style="left:1205px;top:975.5px;color:#e0e0e0;">GameObject Count:8</div>
<div class="t" style="left:1341px;top:975.5px;color:#e0e0e0;">Selected Count:1</div>
<div class="a" style="left:1568px;top:90px;width:350px;height:905px;background:#4f4f4f;"></div>
<div class="a" style="left:1568px;top:91px;width:350px;height:25px;background:#363636;border-top:1px solid #262626;border-bottom:1px solid #2c2c2c;"></div>
<div class="a" style="left:1568px;top:118px;width:118px;height:21px;background:#535353;border:1px solid #2e2e2e;"></div>
<div class="t" style="left:1579px;top:118.5px;">Add Component</div>
<div class="a" style="left:1802px;top:118px;width:116px;height:21px;background:#535353;border:1px solid #2e2e2e;"></div>
<div class="t" style="left:1832px;top:120.5px;">To Prefab</div>
<div class="a" style="left:1568px;top:142px;width:350px;height:171px;background:#4f4f4f;border-top:1px solid #3e3e3e;border-bottom:1px solid #454545;"></div>
<div class="a" style="left:1573px;top:145px;width:342px;height:16px;background:#4f6294;"></div>
<div class="t" style="left:1575px;top:144.5px;">SK_Human_new(Instance)</div>
<svg style="left:1580px;top:160px" width="14" height="14"><path d="M0.5 0 V9.5 H10" stroke="#1a1a1a" fill="none"/></svg>
<div class="t" style="left:1593px;top:159.5px;">SkeletalMeshComponent0(Inherited)</div>
<div class="a" style="left:1568px;top:318px;width:288px;height:24px;background:#353535;border-bottom:1px solid #2a2a2a;"></div>
<div class="a" style="left:1857px;top:318px;width:61px;height:24px;background:#474747;border-left:1px solid #2a2a2a;"></div>
<svg style="left:1880px;top:323px" width="18" height="14"><path d="M1 1.5 H17 M3 4.5 H15 M1 7.5 H17 M3 10.5 H15 M1 13 H17" stroke="#f4f4f4" stroke-width="1.4"/></svg>
<div class="a" style="left:1568px;top:343px;width:332px;height:13px;background:#4a4a4a;"></div>
<div class="a" style="left:1900px;top:343px;width:18px;height:652px;background:#4a4a4a;"></div>
<div class="a" style="left:1901px;top:362px;width:17px;height:541px;background:#666666;"></div>
<svg style="left:1900px;top:343px" width="18" height="652"><path d="M5 13 L9 9 L13 13" stroke="#8a8a8a" stroke-width="1.1" fill="none"/><path d="M5 640 L9 644 L13 640" stroke="#8a8a8a" stroke-width="1.1" fill="none"/></svg>
<div class="a" style="left:1568px;top:378px;width:332px;height:102px;background:#474747;"></div>
<div class="a" style="left:1568px;top:356px;width:332px;height:22px;background:#393939;"></div>
<svg style="left:1570px;top:356px" width="14" height="22"><path d="M1 7.5 H11 L6 14 Z" fill="none" stroke="#c8c8c8" stroke-width="1"/></svg>
<div class="t" style="left:1583px;top:358.5px;">Transform</div>
<div class="a" style="left:1568px;top:502px;width:332px;height:28px;background:#474747;"></div>
<div class="a" style="left:1568px;top:480px;width:332px;height:22px;background:#393939;"></div>
<svg style="left:1570px;top:480px" width="14" height="22"><path d="M1 7.5 H11 L6 14 Z" fill="none" stroke="#c8c8c8" stroke-width="1"/></svg>
<div class="t" style="left:1583px;top:482.5px;">Render</div>
<div class="a" style="left:1568px;top:552px;width:332px;height:28px;background:#474747;"></div>
<div class="a" style="left:1568px;top:530px;width:332px;height:22px;background:#393939;"></div>
<svg style="left:1570px;top:530px" width="14" height="22"><path d="M1 7.5 H11 L6 14 Z" fill="none" stroke="#c8c8c8" stroke-width="1"/></svg>
<div class="t" style="left:1583px;top:532.5px;">Update</div>
<div class="a" style="left:1568px;top:602px;width:332px;height:30px;background:#474747;"></div>
<div class="a" style="left:1568px;top:580px;width:332px;height:22px;background:#393939;"></div>
<svg style="left:1570px;top:580px" width="14" height="22"><path d="M1 7.5 H11 L6 14 Z" fill="none" stroke="#c8c8c8" stroke-width="1"/></svg>
<div class="t" style="left:1583px;top:582.5px;">Skeletal Mesh Component</div>
<div class="a" style="left:1583px;top:606px;width:317px;height:21px;background:#3a3a3a;"></div>
<svg style="left:1586px;top:610px" width="10" height="14"><path d="M1.5 1 L7.5 6.5 L1.5 12 Z" fill="#c0c0c0"/></svg>
<div class="t" style="left:1598px;top:608.5px;">Skeletal Mesh Component</div>
<div class="a" style="left:1568px;top:654px;width:332px;height:84px;background:#474747;"></div>
<div class="a" style="left:1568px;top:632px;width:332px;height:22px;background:#393939;"></div>
<svg style="left:1570px;top:632px" width="14" height="22"><path d="M1 7.5 H11 L6 14 Z" fill="none" stroke="#c8c8c8" stroke-width="1"/></svg>
<div class="t" style="left:1583px;top:634.5px;">Scene Streaming</div>
<div class="a" style="left:1568px;top:760px;width:332px;height:92px;background:#474747;"></div>
<div class="a" style="left:1568px;top:738px;width:332px;height:22px;background:#393939;"></div>
<svg style="left:1570px;top:738px" width="14" height="22"><path d="M1 7.5 H11 L6 14 Z" fill="none" stroke="#c8c8c8" stroke-width="1"/></svg>
<div class="t" style="left:1583px;top:740.5px;">Game Object</div>
<div class="a" style="left:1568px;top:874px;width:332px;height:34px;background:#474747;"></div>
<div class="a" style="left:1568px;top:852px;width:332px;height:22px;background:#393939;"></div>
<svg style="left:1570px;top:852px" width="14" height="22"><path d="M1 7.5 H11 L6 14 Z" fill="none" stroke="#c8c8c8" stroke-width="1"/></svg>
<div class="t" style="left:1583px;top:854.5px;">Layer</div>
<div class="a" style="left:1568px;top:930px;width:332px;height:28px;background:#474747;"></div>
<div class="a" style="left:1568px;top:908px;width:332px;height:22px;background:#393939;"></div>
<svg style="left:1570px;top:908px" width="14" height="22"><path d="M1 7.5 H11 L6 14 Z" fill="none" stroke="#c8c8c8" stroke-width="1"/></svg>
<div class="t" style="left:1583px;top:910.5px;">Network</div>
<div class="a" style="left:1568px;top:980px;width:332px;height:15px;background:#474747;"></div>
<div class="a" style="left:1568px;top:958px;width:332px;height:22px;background:#393939;"></div>
<svg style="left:1570px;top:958px" width="14" height="22"><path d="M1 7.5 H11 L6 14 Z" fill="none" stroke="#c8c8c8" stroke-width="1"/></svg>
<div class="t" style="left:1583px;top:960.5px;">Input</div>
<div class="t" style="left:1583px;top:384.5px;">Position</div>
<div class="t" style="left:1583px;top:408.5px;">Angle</div>
<div class="t" style="left:1583px;top:432.5px;">Scale</div>
<svg style="left:1643px;top:434px" width="13" height="12"><path d="M3 5 V3 C3 0.5 8 0.5 8 3" stroke="#6c8796" stroke-width="1.3" fill="none"/><rect x="2.5" y="5.5" width="9" height="6" fill="#6c8796"/></svg>
<div class="a" style="left:1719.0px;top:382px;width:35px;height:18px;background:#333333;"></div>
<div class="t" style="left:1721.0px;top:383.0px;color:#f4f4f4;">40.0</div>
<div class="a" style="left:1719.0px;top:406px;width:35px;height:18px;background:#333333;"></div>
<div class="t" style="left:1721.0px;top:407.0px;color:#f4f4f4;">0.00</div>
<div class="a" style="left:1719.0px;top:430px;width:35px;height:18px;background:#333333;"></div>
<div class="t" style="left:1721.0px;top:431.0px;color:#f4f4f4;">1.00</div>
<svg style="left:1755.0px;top:386px" width="24" height="12"><path d="M1.5 3.2 H8 V9 H3.5" stroke="#14b8ff" stroke-width="1.9" fill="none"/><path d="M4.5 0.5 V3.5" stroke="#14b8ff" stroke-width="1.4"/><path d="M13.5 3.2 H20 V9 H15.5" stroke="#ff8010" stroke-width="1.9" fill="none"/><path d="M16.5 0.5 V3.5" stroke="#ff8010" stroke-width="1.4"/></svg>
<div class="a" style="left:1779.5px;top:382px;width:35px;height:18px;background:#333333;"></div>
<div class="t" style="left:1781.5px;top:383.0px;color:#f4f4f4;">0.01</div>
<div class="a" style="left:1779.5px;top:406px;width:35px;height:18px;background:#333333;"></div>
<div class="t" style="left:1781.5px;top:407.0px;color:#f4f4f4;">0.00</div>
<div class="a" style="left:1779.5px;top:430px;width:35px;height:18px;background:#333333;"></div>
<div class="t" style="left:1781.5px;top:431.0px;color:#f4f4f4;">1.00</div>
<svg style="left:1815.5px;top:386px" width="24" height="12"><path d="M1.5 3.2 H8 V9 H3.5" stroke="#14b8ff" stroke-width="1.9" fill="none"/><path d="M4.5 0.5 V3.5" stroke="#14b8ff" stroke-width="1.4"/><path d="M13.5 3.2 H20 V9 H15.5" stroke="#ff8010" stroke-width="1.9" fill="none"/><path d="M16.5 0.5 V3.5" stroke="#ff8010" stroke-width="1.4"/></svg>
<div class="a" style="left:1840.0px;top:382px;width:35px;height:18px;background:#333333;"></div>
<div class="t" style="left:1842.0px;top:383.0px;color:#f4f4f4;">33.7</div>
<div class="a" style="left:1840.0px;top:406px;width:35px;height:18px;background:#333333;"></div>
<div class="t" style="left:1842.0px;top:407.0px;color:#f4f4f4;">0.00</div>
<div class="a" style="left:1840.0px;top:430px;width:35px;height:18px;background:#333333;"></div>
<div class="t" style="left:1842.0px;top:431.0px;color:#f4f4f4;">1.00</div>
<svg style="left:1876.0px;top:386px" width="24" height="12"><path d="M1.5 3.2 H8 V9 H3.5" stroke="#14b8ff" stroke-width="1.9" fill="none"/><path d="M4.5 0.5 V3.5" stroke="#14b8ff" stroke-width="1.4"/><path d="M13.5 3.2 H20 V9 H15.5" stroke="#ff8010" stroke-width="1.9" fill="none"/><path d="M16.5 0.5 V3.5" stroke="#ff8010" stroke-width="1.4"/></svg>
<div class="t" style="left:1587px;top:454.5px;">Lock Transform</div>
<div class="a" style="left:1718px;top:457px;width:11px;height:11px;background:#c8c8c8;"></div>
<div class="t" style="left:1587px;top:506.5px;">Hidden</div>
<div class="a" style="left:1718px;top:509px;width:11px;height:11px;background:#c8c8c8;"></div>
<div class="t" style="left:1587px;top:556.5px;">Allow Update Before E</div>
<div class="a" style="left:1718px;top:559px;width:11px;height:11px;background:#c8c8c8;"></div>
<div class="t" style="left:1587px;top:658.5px;">Group Name</div>
<div class="a" style="left:1718px;top:658px;width:158px;height:18px;background:#333333;"></div>
<div class="t" style="left:1720px;top:659.5px;color:#f4f4f4;">None</div>
<div class="a" style="left:1858px;top:659px;width:17px;height:16px;background:#5a5a5a;border-radius:2px;"></div>
<svg style="left:1858px;top:659px" width="17" height="16"><path d="M4.5 6 L8.5 10 L12.5 6" stroke="#e8e8e8" stroke-width="1.5" fill="none"/></svg>
<div class="t" style="left:1587px;top:686.5px;color:#8a8a8a;">Has Streaming Bundle</div>
<div class="a" style="left:1718px;top:689px;width:11px;height:11px;background:#c8c8c8;"></div>
<div class="t" style="left:1587px;top:708.5px;">Load Mode</div>
<div class="a" style="left:1718px;top:708px;width:158px;height:18px;background:#333333;"></div>
<div class="t" style="left:1720px;top:709.5px;color:#f4f4f4;">Position</div>
<div class="a" style="left:1858px;top:709px;width:17px;height:16px;background:#5a5a5a;border-radius:2px;"></div>
<svg style="left:1858px;top:709px" width="17" height="16"><path d="M4.5 6 L8.5 10 L12.5 6" stroke="#e8e8e8" stroke-width="1.5" fill="none"/></svg>
<div class="t" style="left:1587px;top:764.5px;">String Tag</div>
<div class="a" style="left:1718px;top:764px;width:158px;height:17px;background:#333333;"></div>
<div class="t" style="left:1720px;top:765.0px;color:#f4f4f4;">None</div>
<div class="t" style="left:1587px;top:784.5px;">Visible Mask</div>
<div class="a" style="left:1718px;top:784px;width:144px;height:17px;background:#333333;"></div>
<div class="t" style="left:1720px;top:785.0px;color:#f4f4f4;">All</div>
<svg style="left:1864px;top:787px" width="36" height="12"><circle cx="6" cy="5" r="3" stroke="#e0e0e0" stroke-width="1" fill="none"/><path d="M3.8 7.2 L2 9" stroke="#e0e0e0"/><path d="M11 3.2 H16.5 V9 H12.5" stroke="#14b8ff" stroke-width="1.7" fill="none"/><path d="M13.5 0.8 V3.5" stroke="#14b8ff" stroke-width="1.2"/><path d="M23 3.2 H28.5 V9 H24.5" stroke="#ff8010" stroke-width="1.7" fill="none"/><path d="M25.5 0.8 V3.5" stroke="#ff8010" stroke-width="1.2"/></svg>
<div class="t" style="left:1587px;top:804.5px;">Find Camera Compone</div>
<div class="a" style="left:1718px;top:807px;width:11px;height:11px;background:#c8c8c8;"></div>
<svg style="left:1718px;top:807px" width="12" height="12"><path d="M2 5.5 L4.5 9 L10 1" stroke="#555" stroke-width="1.2" fill="none"/></svg>
<div class="a" style="left:1583px;top:826px;width:317px;height:23px;background:#4c4c4c;"></div>
<svg style="left:1732px;top:830px" width="14" height="12"><path d="M2 7 L7 2 L12 7 Z M2 9 H12" stroke="#a8a8a8" fill="#a8a8a8" stroke-width="1"/></svg>
<div class="t" style="left:1587px;top:878.5px;">Layer Name</div>
<div class="a" style="left:1718px;top:878px;width:158px;height:18px;background:#333333;"></div>
<div class="t" style="left:1720px;top:879.5px;color:#f4f4f4;">None</div>
<div class="a" style="left:1858px;top:879px;width:17px;height:16px;background:#5a5a5a;border-radius:2px;"></div>
<svg style="left:1858px;top:879px" width="17" height="16"><path d="M4.5 6 L8.5 10 L12.5 6" stroke="#e8e8e8" stroke-width="1.5" fill="none"/></svg>
<div class="t" style="left:1587px;top:934.5px;">Add Net Scene</div>
<div class="a" style="left:1718px;top:937px;width:11px;height:11px;background:#c8c8c8;"></div>
<div class="t" style="left:1587px;top:984.5px;">Input Priority</div>
<div class="a" style="left:1718px;top:985px;width:144px;height:10px;background:#333333;"></div>
<div class="a" style="left:1718px;top:985px;width:72px;height:10px;background:#5a5a5a;"></div>
<div class="t" style="left:1720px;top:986.5px;">0</div>
<div class="a" style="left:1568px;top:994px;width:350px;height:26px;background:#505050;"></div>
<div class="a" style="left:0px;top:995px;width:1200px;height:25px;background:#505050;"></div>
<div class="a" style="left:1200px;top:995px;width:368px;height:25px;background:#505050;"></div>
<div class="t" style="left:2px;top:997.5px;color:#dedede;letter-spacing:-0.15px">Mouse Location:zone_50_50,X:38.18,Y:0.00,Z:34.76</div>
<div class="t" style="left:382px;top:997.5px;color:#dedede;">Camera Location:X:39.5, Y:0.9, Z:36.9</div>
<div class="t" style="left:688px;top:997.5px;color:#dedede;">Mouse Distance:</div>
<svg style="left:0;top:0" width="1918" height="1020"><defs><filter id="sh" x="-20%" y="-20%" width="140%" height="140%"><feGaussianBlur stdDeviation="1.5"/></filter></defs><g transform="translate(2,2)" fill="#000" opacity="0.25" filter="url(#sh)"><path d="M828.4 736.9 L827.6 733.9 L826.7 730.9 L825.8 727.8 L824.8 724.6 L823.8 721.3 L822.7 718.1 L821.6 714.7 L820.5 711.4 L819.3 707.9 L818.0 704.5 L816.7 701.0 L815.3 697.4 L813.8 693.8 L812.3 690.2 L810.7 686.6 L809.0 682.9 L807.3 679.3 L805.4 675.5 L803.5 671.8 L801.5 668.1 L799.4 664.3 L797.2 660.6 L794.9 656.8 L792.5 653.0 L790.0 649.2 L787.4 645.4 L784.7 641.7 L781.8 637.9 L778.9 634.1 L775.8 630.4 L772.6 626.6 L769.3 622.9 L765.8 619.2 L762.2 615.6 L758.5 611.9 L754.7 608.3 L750.7 604.7 L746.5 601.1 L742.2 597.6 L737.8 594.1 L733.2 590.7 L728.4 587.3 L723.5 584.0 L718.4 580.7 L713.2 577.4 L707.7 574.2 L702.1 571.1 L696.4 568.1 L690.4 565.1 L684.3 562.1 L681.7 567.9 L687.7 570.6 L693.6 573.5 L699.3 576.4 L704.9 579.4 L710.2 582.4 L715.4 585.5 L720.4 588.6 L725.3 591.8 L730.0 595.0 L734.6 598.3 L739.0 601.7 L743.3 605.0 L747.5 608.4 L751.4 611.9 L755.3 615.3 L759.0 618.8 L762.6 622.4 L766.1 625.9 L769.4 629.5 L772.6 633.1 L775.8 636.7 L778.7 640.3 L781.6 644.0 L784.4 647.6 L787.0 651.3 L789.6 654.9 L792.1 658.6 L794.4 662.3 L796.7 665.9 L798.9 669.6 L801.0 673.2 L803.0 676.8 L804.9 680.5 L806.7 684.1 L808.5 687.6 L810.2 691.2 L811.8 694.7 L813.4 698.2 L814.9 701.7 L816.3 705.1 L817.7 708.5 L819.0 711.9 L820.2 715.2 L821.5 718.5 L822.6 721.7 L823.8 724.9 L824.9 728.0 L825.9 731.1 L827.0 734.1 L828.0 737.1Z"/><path d="M667.5 558.5 L693.5 559.5 L687 566.5 L684.5 577.5 Z"/></g><path d="M828.4 736.9 L827.6 733.9 L826.7 730.9 L825.8 727.8 L824.8 724.6 L823.8 721.3 L822.7 718.1 L821.6 714.7 L820.5 711.4 L819.3 707.9 L818.0 704.5 L816.7 701.0 L815.3 697.4 L813.8 693.8 L812.3 690.2 L810.7 686.6 L809.0 682.9 L807.3 679.3 L805.4 675.5 L803.5 671.8 L801.5 668.1 L799.4 664.3 L797.2 660.6 L794.9 656.8 L792.5 653.0 L790.0 649.2 L787.4 645.4 L784.7 641.7 L781.8 637.9 L778.9 634.1 L775.8 630.4 L772.6 626.6 L769.3 622.9 L765.8 619.2 L762.2 615.6 L758.5 611.9 L754.7 608.3 L750.7 604.7 L746.5 601.1 L742.2 597.6 L737.8 594.1 L733.2 590.7 L728.4 587.3 L723.5 584.0 L718.4 580.7 L713.2 577.4 L707.7 574.2 L702.1 571.1 L696.4 568.1 L690.4 565.1 L684.3 562.1 L681.7 567.9 L687.7 570.6 L693.6 573.5 L699.3 576.4 L704.9 579.4 L710.2 582.4 L715.4 585.5 L720.4 588.6 L725.3 591.8 L730.0 595.0 L734.6 598.3 L739.0 601.7 L743.3 605.0 L747.5 608.4 L751.4 611.9 L755.3 615.3 L759.0 618.8 L762.6 622.4 L766.1 625.9 L769.4 629.5 L772.6 633.1 L775.8 636.7 L778.7 640.3 L781.6 644.0 L784.4 647.6 L787.0 651.3 L789.6 654.9 L792.1 658.6 L794.4 662.3 L796.7 665.9 L798.9 669.6 L801.0 673.2 L803.0 676.8 L804.9 680.5 L806.7 684.1 L808.5 687.6 L810.2 691.2 L811.8 694.7 L813.4 698.2 L814.9 701.7 L816.3 705.1 L817.7 708.5 L819.0 711.9 L820.2 715.2 L821.5 718.5 L822.6 721.7 L823.8 724.9 L824.9 728.0 L825.9 731.1 L827.0 734.1 L828.0 737.1Z" fill="#f59b40"/><path d="M667.5 558.5 L693.5 559.5 L687 566.5 L684.5 577.5 Z" fill="#f59b40"/></svg>
<div class="a" style="left:0px;top:1018px;width:1918px;height:2px;background:#263426;"></div>
<div class="a" style="left:48px;top:1018px;width:344px;height:2px;background:#f2f2f2;"></div>
<div class="a" style="left:835px;top:1018px;width:42px;height:2px;background:#5a5a5a;"></div>
</body></html>
